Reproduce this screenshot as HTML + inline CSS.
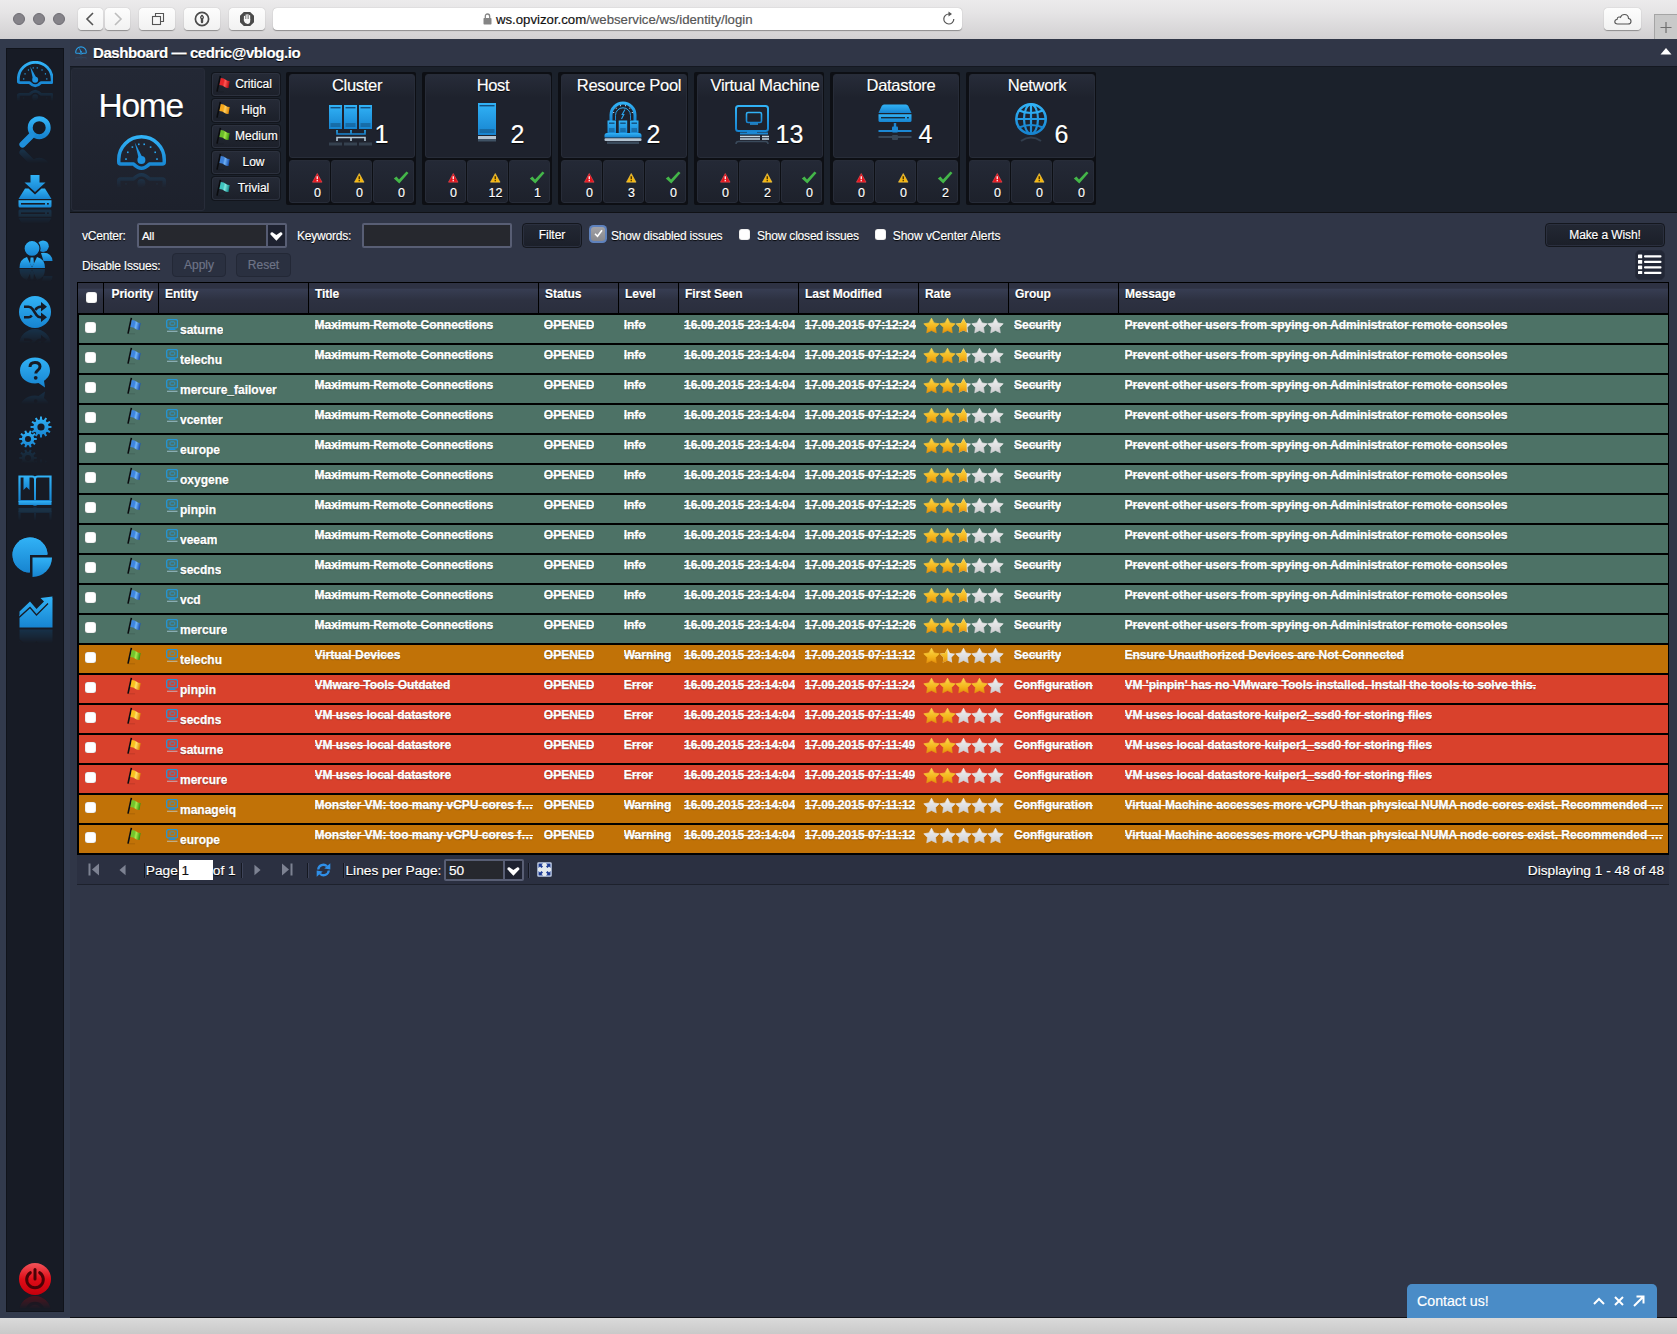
<!DOCTYPE html><html><head><meta charset="utf-8"><title>Dashboard</title><style>
*{box-sizing:border-box;margin:0;padding:0}
html,body{width:1677px;height:1334px;overflow:hidden}
body{position:relative;background:#303647;font-family:"Liberation Sans",sans-serif;color:#fff;font-size:12px;-webkit-text-stroke-width:0.18px}
.abs{position:absolute}
#chrome{left:0;top:0;width:1677px;height:39px;background:linear-gradient(#ecebec 0,#e6e5e6 30%,#d2d0d2 100%)}
.tl{width:12px;height:12px;border-radius:6px;background:#858389;border:0.800px solid #6f6d74;top:13px}
.cb{top:8px;height:22px;background:linear-gradient(#fdfdfd,#f2f2f2);border-radius:4px;box-shadow:0 0.5px 1px rgba(0,0,0,.35)}
#url{left:273px;top:8px;width:689px;height:22px;background:#fff;border-radius:4px;box-shadow:0 0.5px 1px rgba(0,0,0,.35);color:#333;font-size:13.2px;line-height:22px}
#bot{left:0;top:1318px;width:1677px;height:16px;background:linear-gradient(#dadada,#c9c9c9)}
#side{left:0;top:39px;width:70px;height:1279px;background:#323a4c}
#sidein{left:6px;top:9px;width:58px;height:1264px;background:#171b25;border:1px solid #10131a}
#title{left:70px;top:39px;width:1607px;height:27px;background:#303647}
#title b{position:absolute;left:23px;top:4.500px;font-size:15px;letter-spacing:-0.4px;text-shadow:0 1px 1px #000}
#dash{left:70px;top:66px;width:1607px;height:147px;background:#1b212b;border-top:1px solid #141821;border-bottom:1px solid #101216}
.box{background:linear-gradient(#262b38 0,#1e222d 30%,#1e222d 100%);border:1px solid #2d3240;border-radius:3px}
#home{left:1px;top:0.500px;width:134px;height:143.500px;background:linear-gradient(#232835,#1d212c);border:1px solid #272c39;border-radius:3px}
.pb{left:142px;width:68px;height:23px;background:linear-gradient(#252a36,#1c202a);border:1px solid #2c313e;border-radius:3px;box-shadow:0 0 0 1px #12151c;font-size:12px;line-height:21px;text-shadow:0 1px 1px #000}
.tile{top:5px;width:130px;height:133px;background:#0d0f14;border-radius:2px}
.tile .top{left:2.500px;top:2px;width:126px;height:84px;background:linear-gradient(#272c39 0,#1e222d 28%,#1e222d 100%);border:1px solid #272c38;border-radius:3px}
.tile .cell{top:88px;width:41px;height:43px;background:linear-gradient(#242936,#1d212b);border:1px solid #272c38;border-radius:3px}
.tile .ttl{left:6px;top:4px;width:130px;text-align:center;font-size:16.5px;letter-spacing:-0.3px;text-shadow:0 1px 1px #000;white-space:nowrap}
.tile .num{font-size:25px;top:48px;line-height:28px;text-shadow:0 1px 1px #000}
.cnt{font-size:12.5px;text-align:center;width:41px;top:114px;text-shadow:0 1px 1px #000}
#filt{left:70px;top:212px;width:1607px;height:70px}
.lbl{font-size:12px;letter-spacing:-0.2px;text-shadow:0 1px 1px #000;white-space:nowrap}
.inp{background:#26282e;border:2px solid #585e74;border-radius:2px}
.btn{background:linear-gradient(#232834,#1b1f29);border:1px solid #14171e;border-radius:4px;text-align:center;font-size:12px;text-shadow:0 1px 1px #000;box-shadow:0 0 0 1px #2a2f3e inset}
.btn.dis{color:#6e7487;background:#2a3040;box-shadow:none;border-color:#232836;text-shadow:none}
.chk{width:11px;height:11px;background:#fff;border-radius:2.5px;box-shadow:0 0 1px rgba(0,0,0,.6) inset}
#grid{left:77px;top:282px;width:1592px;height:573px;background:#000}
.hd{top:1px;height:30px;background:linear-gradient(#2e3243 0,#2e3243 17%,#373d52 21%,#2d3141 58%,#2a2e3d 100%);font-weight:bold;font-size:12px;padding:4px 0 0 6px;text-shadow:0 1px 1px #000;letter-spacing:-0.05px}
.row{left:1px;width:1590px;height:28px;box-shadow:inset 1px 0 0 #000}
.row div{position:absolute;white-space:nowrap;font-weight:bold;font-size:12px;letter-spacing:0;text-shadow:0 1px 1px rgba(0,0,0,.4);-webkit-text-stroke:0.25px #fff;overflow:hidden}
.row .s{top:3px;height:16px;line-height:14px}
.k{display:inline-block;height:14px;background:linear-gradient(#fff,#fff) 0 7px/100% 1px no-repeat}
.row .e{top:7px;left:102px;height:18px;line-height:16px}
#pg{left:77px;top:855px;width:1592px;height:30px;background:#2b3041;border-bottom:1px solid #1d212c}
#pg .t{position:absolute;font-size:13.7px;top:7.500px;white-space:nowrap;text-shadow:0 1px 1px #000}
#contact{left:1407px;top:1284px;width:250px;height:34px;background:#4a8cc7;border-radius:5px 5px 0 0;font-size:14.2px;line-height:35px}
</style></head><body><svg width="0" height="0" style="position:absolute"><defs><linearGradient id="gb" x1="0" y1="0" x2="0" y2="1"><stop offset="0" stop-color="#31b2f6"/><stop offset="1" stop-color="#1784d0"/></linearGradient><linearGradient id="gr" x1="0" y1="0" x2="0" y2="1"><stop offset="0" stop-color="#f2545a"/><stop offset="0.5" stop-color="#e00d18"/><stop offset="1" stop-color="#c4000c"/></linearGradient><linearGradient id="gy" x1="0" y1="0" x2="0" y2="1"><stop offset="0" stop-color="#fcd94c"/><stop offset="0.600" stop-color="#f3b51c"/><stop offset="1" stop-color="#e5900c"/></linearGradient><linearGradient id="gs" x1="0" y1="0" x2="0" y2="1"><stop offset="0" stop-color="#f2f2f2"/><stop offset="1" stop-color="#cfcfd2"/></linearGradient><linearGradient id="fe8252a" x1="0" y1="0" x2="1" y2="0.200"><stop offset="0" stop-color="#e8252a"/><stop offset="0.450" stop-color="#e8252a"/><stop offset="0.620" stop-color="#ff5a55"/><stop offset="1" stop-color="#b80f16"/></linearGradient><linearGradient id="ff7a81b" x1="0" y1="0" x2="1" y2="0.200"><stop offset="0" stop-color="#f7a81b"/><stop offset="0.450" stop-color="#f7a81b"/><stop offset="0.620" stop-color="#ffd060"/><stop offset="1" stop-color="#e08a08"/></linearGradient><linearGradient id="f6cbf2a" x1="0" y1="0" x2="1" y2="0.200"><stop offset="0" stop-color="#6cbf2a"/><stop offset="0.450" stop-color="#6cbf2a"/><stop offset="0.620" stop-color="#a5e64a"/><stop offset="1" stop-color="#3f9a10"/></linearGradient><linearGradient id="f3d7fd6" x1="0" y1="0" x2="1" y2="0.200"><stop offset="0" stop-color="#3d7fd6"/><stop offset="0.450" stop-color="#3d7fd6"/><stop offset="0.620" stop-color="#6fb0f5"/><stop offset="1" stop-color="#1d55b0"/></linearGradient><linearGradient id="f3fc4bf" x1="0" y1="0" x2="1" y2="0.200"><stop offset="0" stop-color="#3fc4bf"/><stop offset="0.450" stop-color="#3fc4bf"/><stop offset="0.620" stop-color="#7fe8e0"/><stop offset="1" stop-color="#1a9090"/></linearGradient><linearGradient id="f3f86e0" x1="0" y1="0" x2="1" y2="0.200"><stop offset="0" stop-color="#3f86e0"/><stop offset="0.450" stop-color="#3f86e0"/><stop offset="0.620" stop-color="#6fb4f8"/><stop offset="1" stop-color="#1d55b3"/></linearGradient><linearGradient id="f74c52c" x1="0" y1="0" x2="1" y2="0.200"><stop offset="0" stop-color="#74c52c"/><stop offset="0.450" stop-color="#74c52c"/><stop offset="0.620" stop-color="#a8ea4c"/><stop offset="1" stop-color="#3f9a10"/></linearGradient><linearGradient id="ff9c21f" x1="0" y1="0" x2="1" y2="0.200"><stop offset="0" stop-color="#f9c21f"/><stop offset="0.450" stop-color="#f9c21f"/><stop offset="0.620" stop-color="#ffe06a"/><stop offset="1" stop-color="#e08e08"/></linearGradient></defs></svg>
<div id="chrome" class="abs">
<div class="abs tl" style="left:13px"></div>
<div class="abs tl" style="left:33px"></div>
<div class="abs tl" style="left:53px"></div>
<div class="abs cb" style="left:78px;width:25px"><svg class="abs" style="left:0;top:0" width="25" height="22" viewBox="0 0 25 22" ><path d="M15 5 L9 11 L15 17" stroke="#555" stroke-width="1.6" fill="none"/></svg></div>
<div class="abs cb" style="left:105px;width:25px"><svg class="abs" style="left:0;top:0" width="25" height="22" viewBox="0 0 25 22" ><path d="M10 5 L16 11 L10 17" stroke="#bdbdbd" stroke-width="1.6" fill="none"/></svg></div>
<div class="abs cb" style="left:139px;width:36px"><svg class="abs" style="left:0;top:0" width="36" height="22" viewBox="0 0 36 22" ><rect x="13.5" y="8.5" width="8" height="8" fill="#f7f7f7" stroke="#555" stroke-width="1.1"/><path d="M16.500 8.5 V5.500 H24.500 V13.500 H21.5" stroke="#555" stroke-width="1.1" fill="none"/></svg></div>
<div class="abs cb" style="left:184px;width:36px"><svg class="abs" style="left:0;top:0" width="36" height="22" viewBox="0 0 36 22" ><circle cx="18" cy="11" r="6.6" fill="none" stroke="#4a4a4a" stroke-width="1.7"/><rect x="16.800" y="6.800" width="2.4" height="8.4" rx="1.2" fill="#4a4a4a"/><circle cx="18" cy="9.300" r="1.9" fill="#4a4a4a"/><circle cx="18" cy="9.300" r="0.7" fill="#f7f7f7"/></svg></div>
<div class="abs cb" style="left:229px;width:36px"><svg class="abs" style="left:0;top:0" width="36" height="22" viewBox="0 0 36 22" ><path d="M14.800 4 H21.200 L25 7.800 V14.200 L21.200 18 H14.800 L11 14.200 V7.800 Z" fill="#4a4a4a"/><path d="M15.500 12 V8.300 M17.200 11.500 V6.800 M18.900 11.500 V6.500 M20.600 11.500 V7.500" stroke="#f7f7f7" stroke-width="1.2" stroke-linecap="round"/><path d="M14.900 11 H21.200 V13 Q21.200 16 18.500 16 Q16 16 14.900 13 Z" fill="#f7f7f7"/></svg></div>
<div id="url" class="abs"><svg class="abs" style="left:210px;top:5px" width="9" height="12" viewBox="0 0 9 12" ><rect x="0.5" y="5" width="8" height="6.5" rx="0.8" fill="#858585"/><path d="M2.300 5 V3.500 Q2.300 1 4.500 1 Q6.700 1 6.700 3.500 V5" stroke="#858585" stroke-width="1.3" fill="none"/></svg><span class="abs" style="left:223px;top:1px;white-space:nowrap;letter-spacing:0"><span style="color:#111">ws.opvizor.com</span><span style="color:#555">/webservice/ws/identity/login</span></span><svg class="abs" style="left:669px;top:3px" width="14" height="15" viewBox="0 0 14 15" ><path d="M11.800 8 A5 5 0 1 1 7 3" stroke="#555" stroke-width="1.2" fill="none"/><path d="M6.500 0.500 L10 3 L6.500 5.600 Z" fill="#555"/></svg></div>
<div class="abs cb" style="left:1604px;width:37px"><svg class="abs" style="left:0;top:0" width="37" height="22" viewBox="0 0 37 22" ><path d="M13.500 16 H24 Q27 16 27 13.200 Q27 10.800 24.500 10.500 Q24.300 6.500 20.500 6.500 Q17.500 6.500 16.500 9.300 Q15.800 8.800 14.800 9 Q13 9.500 13.200 11.200 Q10.800 11.700 10.800 13.800 Q10.800 16 13.500 16 Z" fill="none" stroke="#555" stroke-width="1.1"/></svg></div>
<div class="abs" style="left:1654px;top:14px;width:24px;height:25px;background:#c9c9c9;border:1px solid #a5a5a5;border-bottom:none"><svg class="abs" style="left:-1px;top:0" width="24" height="25" viewBox="0 0 24 25" ><path d="M12 7 V18 M6.500 12.500 H17.500" stroke="#6f6f6f" stroke-width="1.2"/></svg></div>
</div>
<div id="bot" class="abs"></div><div class="abs" style="left:70px;top:1317px;width:1607px;height:1px;background:#0e1016"></div><div class="abs" style="left:0;top:39px;width:1677px;height:1px;background:#262b38"></div>
<div id="side" class="abs"><div id="sidein" class="abs"></div>
<svg class="abs" style="left:16.800px;top:22px;-webkit-box-reflect:below 1px linear-gradient(rgba(255,255,255,0) 55%,rgba(255,255,255,.22))" width="36.5" height="26.8" viewBox="0 0 49 36" ><path d="M1.750 24.500 A22.750 22.750 0 0 1 47.250 24.500 V27 Q47.250 29 45.250 29 H32.500 Q24.500 37.500 16.500 29 H3.750 Q1.750 29 1.750 27 Z" fill="none" stroke="url(#gb)" stroke-width="3.8" stroke-linejoin="round"/><rect x="8.2" y="23.3" width="1.600" height="1.600" fill="#2aa5ee"/><rect x="10.0" y="16.5" width="1.600" height="1.600" fill="#2aa5ee"/><rect x="14.6" y="11.3" width="1.600" height="1.600" fill="#2aa5ee"/><rect x="21.0" y="8.5" width="1.600" height="1.600" fill="#2aa5ee"/><rect x="26.4" y="8.5" width="1.600" height="1.600" fill="#2aa5ee"/><rect x="32.8" y="11.3" width="1.600" height="1.600" fill="#2aa5ee"/><rect x="37.4" y="16.5" width="1.600" height="1.600" fill="#2aa5ee"/><rect x="39.2" y="23.3" width="1.600" height="1.600" fill="#2aa5ee"/><path d="M17.700 7.300 L26.5 23.5 L21.7 25.5 Z" fill="#1f93e0"/><circle cx="24.400" cy="25.100" r="4" fill="#1f93e0"/></svg><svg class="abs" style="left:19px;top:77px;-webkit-box-reflect:below 1px linear-gradient(rgba(255,255,255,0) 55%,rgba(255,255,255,.22))" width="32" height="32" viewBox="0 0 32 32" ><circle cx="20.200" cy="11.700" r="9" fill="none" stroke="url(#gb)" stroke-width="5"/><path d="M12.500 19.500 L3.500 28.500" stroke="#1f8fda" stroke-width="6.200" stroke-linecap="round"/></svg><svg class="abs" style="left:18px;top:135.500px;-webkit-box-reflect:below 1px linear-gradient(rgba(255,255,255,0) 55%,rgba(255,255,255,.22))" width="34" height="33" viewBox="0 0 34 33" ><path d="M12.500 0 H21.500 V7.500 H27.500 L17 17 L6.500 7.500 H12.500 Z" fill="url(#gb)"/><path d="M7 13.500 H10.500 L17 19.500 L23.500 13.500 H27 L33.500 24 H0.500 Z" fill="url(#gb)"/><path d="M0.500 25.300 H33.500 V31 Q33.500 32.500 32 32.500 H2 Q0.500 32.500 0.500 31 Z" fill="url(#gb)"/><rect x="3" y="28" width="24" height="1.600" fill="#171b25"/><rect x="29" y="28" width="1.800" height="1.600" fill="#171b25"/></svg><svg class="abs" style="left:18.500px;top:200.500px;-webkit-box-reflect:below 1px linear-gradient(rgba(255,255,255,0) 55%,rgba(255,255,255,.22))" width="34" height="28" viewBox="0 0 34 28" ><circle cx="24" cy="6.200" r="5.800" fill="url(#gb)"/><path d="M22 13 Q28 12 31 15 Q33.500 17.500 33.500 21 H24.500 Z" fill="url(#gb)"/><circle cx="13" cy="8.400" r="8" fill="url(#gb)" stroke="#171b25" stroke-width="1.200"/><path d="M0.500 28 Q0.500 19 8 17 L13 27.500 L18 17 Q26 19 26 28 Z" fill="url(#gb)"/><path d="M11.600 17.500 H14.400 L15 24 L13 27 L11 24 Z" fill="url(#gb)"/></svg><svg class="abs" style="left:19px;top:257px;-webkit-box-reflect:below 1px linear-gradient(rgba(255,255,255,0) 55%,rgba(255,255,255,.22))" width="32" height="32" viewBox="0 0 32 32" ><circle cx="16" cy="16" r="16" fill="url(#gb)"/><path d="M5 10.800 H9.500 Q12 10.800 13.500 13 L17.500 19 Q19 21.200 21.500 21.200 H23" stroke="#171b25" stroke-width="2.600" fill="none"/><path d="M5 21.200 H9.500 Q11.500 21.200 12.800 19.500 M16.200 14 Q18.500 10.800 21.500 10.800 H23" stroke="#171b25" stroke-width="2.600" fill="none"/><path d="M22 6 L28 10.800 L22 15.600 Z M22 16.400 L28 21.200 L22 26 Z" fill="#171b25"/></svg><svg class="abs" style="left:19px;top:318px;-webkit-box-reflect:below 1px linear-gradient(rgba(255,255,255,0) 55%,rgba(255,255,255,.22))" width="32" height="32" viewBox="0 0 32 32" ><path d="M16 0.500 C24.500 0.500 31 6 31 13.500 C31 18 28.500 21.500 25 23.800 L26 30.500 L19.500 26 C18.500 26.300 17.300 26.400 16 26.400 C7.500 26.400 1 21 1 13.500 C1 6 7.500 0.500 16 0.500 Z" fill="url(#gb)"/><path d="M11 10 Q11 5.500 16 5.500 Q21 5.500 21 9.600 Q21 12 18.600 13.500 Q16.800 14.700 16.800 16.500" stroke="#171b25" stroke-width="3" fill="none"/><circle cx="16.700" cy="20.800" r="1.900" fill="#171b25"/></svg><svg class="abs" style="left:19px;top:377px;-webkit-box-reflect:below 1px linear-gradient(rgba(255,255,255,0) 55%,rgba(255,255,255,.22))" width="33" height="32" viewBox="0 0 33 32" ><path d="M29.52 9.89 L32.46 10.07 L32.46 11.93 L29.52 12.11 L29.07 13.80 L31.52 15.42 L30.59 17.04 L27.96 15.72 L26.72 16.96 L28.04 19.59 L26.42 20.52 L24.80 18.07 L23.11 18.52 L22.93 21.46 L21.07 21.46 L20.89 18.52 L19.20 18.07 L17.58 20.52 L15.96 19.59 L17.28 16.96 L16.04 15.72 L13.41 17.04 L12.48 15.42 L14.93 13.80 L14.48 12.11 L11.54 11.93 L11.54 10.07 L14.48 9.89 L14.93 8.20 L12.48 6.58 L13.41 4.96 L16.04 6.28 L17.28 5.04 L15.96 2.41 L17.58 1.48 L19.20 3.93 L20.89 3.48 L21.07 0.54 L22.93 0.54 L23.11 3.48 L24.80 3.93 L26.42 1.48 L28.04 2.41 L26.72 5.04 L27.96 6.28 L30.59 4.96 L31.52 6.58 L29.07 8.20 Z M25.6 11 A3.6 3.6 0 1 0 18.4 11 A3.6 3.6 0 1 0 25.6 11 Z" fill="url(#gb)" fill-rule="evenodd"/><path d="M15.10 21.91 L17.75 22.06 L17.75 23.94 L15.10 24.09 L14.58 25.71 L16.63 27.38 L15.53 28.90 L13.30 27.47 L11.92 28.47 L12.60 31.03 L10.81 31.61 L9.85 29.14 L8.15 29.14 L7.19 31.61 L5.40 31.03 L6.08 28.47 L4.70 27.47 L2.47 28.90 L1.37 27.38 L3.42 25.71 L2.90 24.09 L0.25 23.94 L0.25 22.06 L2.90 21.91 L3.42 20.29 L1.37 18.62 L2.47 17.10 L4.70 18.53 L6.08 17.53 L5.40 14.97 L7.19 14.39 L8.15 16.86 L9.85 16.86 L10.81 14.39 L12.60 14.97 L11.92 17.53 L13.30 18.53 L15.53 17.10 L16.63 18.62 L14.58 20.29 Z M12 23 A3 3 0 1 0 6 23 A3 3 0 1 0 12 23 Z" fill="url(#gb)" fill-rule="evenodd"/></svg><svg class="abs" style="left:18px;top:436px;-webkit-box-reflect:below 1px linear-gradient(rgba(255,255,255,0) 55%,rgba(255,255,255,.22))" width="34" height="31" viewBox="0 0 34 31" ><path d="M1.500 1.500 H14 Q17 1.500 17 4 Q17 1.500 20 1.500 H32.500 V26 H1.500 Z" fill="none" stroke="url(#gb)" stroke-width="2.200"/><rect x="16" y="3" width="2" height="24" fill="url(#gb)"/><path d="M5.500 1 H11.500 V15 L8.500 12 L5.500 15 Z" fill="url(#gb)"/><path d="M0.500 26 H33.500 V30 H19.500 Q17 31.500 14.500 30 H0.500 Z" fill="url(#gb)"/></svg><svg class="abs" style="left:12px;top:497.500px" width="41" height="40" viewBox="0 0 41 40" ><path d="M35.500 17 A17.500 17.500 0 1 0 17.500 35.500 L17.500 17.500 Z M35.400 17 A17.500 17.500 0 0 0 18 0.500 Z" fill="url(#gb)"/><circle cx="18" cy="18" r="17.500" fill="url(#gb)"/><path d="M18 18 H41 V41 H18 Z" fill="#171b25"/><path d="M20.500 20.500 H40 A19.500 19.500 0 0 1 20.500 40 Z" fill="url(#gb)"/></svg><svg class="abs" style="left:18.500px;top:557px;-webkit-box-reflect:below 1px linear-gradient(rgba(255,255,255,0) 55%,rgba(255,255,255,.22))" width="34" height="32" viewBox="0 0 34 32" ><path d="M0.500 31.500 V15.500 L11 5.500 L17.500 13 L25 5.500 L21.500 2 L33.500 0.500 L32 12 L28.500 8.800 L17.500 20 L11 12.500 L0.500 22 Z" fill="url(#gb)"/><path d="M0.500 31.500 V19 L11 9.500 L17.500 17 L33.500 2 V31.500 Z" fill="url(#gb)"/><path d="M0 21.500 L11 11.500 L17.500 19 L29 7.500" stroke="#171b25" stroke-width="1.300" fill="none"/></svg><svg class="abs" style="left:19px;top:1224px;-webkit-box-reflect:below 1px linear-gradient(rgba(255,255,255,0) 60%,rgba(255,255,255,.3))" width="32" height="32" viewBox="0 0 32 32" ><circle cx="16" cy="16" r="16" fill="url(#gr)"/><path d="M11.300 9.700 A8.300 8.300 0 1 0 20.700 9.700" stroke="#4a0206" stroke-width="3" fill="none" stroke-linecap="round"/><path d="M16 6.500 V16" stroke="#4a0206" stroke-width="3" stroke-linecap="round"/></svg>
</div>
<div id="title" class="abs"><svg class="abs" style="left:4.800px;top:7px;-webkit-box-reflect:below 1px linear-gradient(rgba(255,255,255,0) 55%,rgba(255,255,255,.22))" width="12" height="9" viewBox="0 0 12 9" ><path d="M0.700 6.200 A5.300 5.300 0 0 1 11.300 6.200 Q11.300 7.300 10.300 7.300 H7.800 Q6 8.700 4.200 7.300 H1.700 Q0.700 7.300 0.700 6.200 Z" fill="none" stroke="#2a9fe8" stroke-width="1.100"/><path d="M4.500 2.500 L6 6" stroke="#2a9fe8" stroke-width="0.900"/><circle cx="6" cy="6" r="0.900" fill="#2a9fe8"/></svg><b>Dashboard — cedric@vblog.io</b><svg class="abs" style="left:1590px;top:8px" width="12" height="8" viewBox="0 0 12 8"><path d="M0.5 7.5 L6 1 L11.5 7.5 Z" fill="#fff"/></svg></div>
<div id="dash" class="abs">
<div id="home" class="abs"><div class="abs" style="left:1.700px;top:18.200px;width:134px;text-align:center;font-size:33.500px;letter-spacing:-1.2px;text-shadow:0 1px 1px #000">Home</div><svg class="abs" style="left:44.600px;top:66.400px;-webkit-box-reflect:below 1px linear-gradient(rgba(255,255,255,0) 55%,rgba(255,255,255,.22))" width="49" height="36" viewBox="0 0 49 36" ><path d="M1.750 24.500 A22.750 22.750 0 0 1 47.250 24.500 V27 Q47.250 29 45.250 29 H32.500 Q24.500 37.500 16.500 29 H3.750 Q1.750 29 1.750 27 Z" fill="none" stroke="url(#gb)" stroke-width="3.5" stroke-linejoin="round"/><rect x="8.2" y="23.3" width="1.600" height="1.600" fill="#2aa5ee"/><rect x="10.0" y="16.5" width="1.600" height="1.600" fill="#2aa5ee"/><rect x="14.6" y="11.3" width="1.600" height="1.600" fill="#2aa5ee"/><rect x="21.0" y="8.5" width="1.600" height="1.600" fill="#2aa5ee"/><rect x="26.4" y="8.5" width="1.600" height="1.600" fill="#2aa5ee"/><rect x="32.8" y="11.3" width="1.600" height="1.600" fill="#2aa5ee"/><rect x="37.4" y="16.5" width="1.600" height="1.600" fill="#2aa5ee"/><rect x="39.2" y="23.3" width="1.600" height="1.600" fill="#2aa5ee"/><path d="M17.700 7.300 L26.0 23.5 L22.2 25.5 Z" fill="#1f93e0"/><circle cx="24.400" cy="25.100" r="4" fill="#1f93e0"/></svg></div>
<div class="abs pb" style="top:5.5px"><svg class="abs" style="left:3px;top:1.500px" width="15" height="18" viewBox="0 0 15 18" ><path d="M4.400 0.800 L1 16.600" stroke="#0b0c0f" stroke-width="1.600"/><path d="M1.500 16.800 H8" stroke="#000" stroke-width="0.800" opacity="0.150"/><path d="M4.800 2.900 Q8 2.900 9.700 4.700 Q11.300 6.200 13.700 6.100 L12.500 13.100 Q10 13.200 8.300 11.700 Q6.500 10.100 3.400 9.900 Z" fill="url(#fe8252a)"/></svg><span class="abs" style="left:22px;width:37px;text-align:center;letter-spacing:0;white-space:nowrap">Critical</span></div>
<div class="abs pb" style="top:31.5px"><svg class="abs" style="left:3px;top:1.500px" width="15" height="18" viewBox="0 0 15 18" ><path d="M4.400 0.800 L1 16.600" stroke="#0b0c0f" stroke-width="1.600"/><path d="M1.500 16.800 H8" stroke="#000" stroke-width="0.800" opacity="0.150"/><path d="M4.800 2.900 Q8 2.900 9.700 4.700 Q11.300 6.200 13.700 6.100 L12.500 13.100 Q10 13.200 8.300 11.700 Q6.500 10.100 3.400 9.900 Z" fill="url(#ff7a81b)"/></svg><span class="abs" style="left:22px;width:37px;text-align:center;letter-spacing:0;white-space:nowrap">High</span></div>
<div class="abs pb" style="top:57.5px"><svg class="abs" style="left:3px;top:1.500px" width="15" height="18" viewBox="0 0 15 18" ><path d="M4.400 0.800 L1 16.600" stroke="#0b0c0f" stroke-width="1.600"/><path d="M1.500 16.800 H8" stroke="#000" stroke-width="0.800" opacity="0.150"/><path d="M4.800 2.900 Q8 2.900 9.700 4.700 Q11.300 6.200 13.700 6.100 L12.500 13.100 Q10 13.200 8.300 11.700 Q6.500 10.100 3.400 9.900 Z" fill="url(#f6cbf2a)"/></svg><span class="abs" style="left:22px;width:37px;text-align:left;letter-spacing:0;white-space:nowrap">Medium</span></div>
<div class="abs pb" style="top:83.5px"><svg class="abs" style="left:3px;top:1.500px" width="15" height="18" viewBox="0 0 15 18" ><path d="M4.400 0.800 L1 16.600" stroke="#0b0c0f" stroke-width="1.600"/><path d="M1.500 16.800 H8" stroke="#000" stroke-width="0.800" opacity="0.150"/><path d="M4.800 2.900 Q8 2.900 9.700 4.700 Q11.300 6.200 13.700 6.100 L12.500 13.100 Q10 13.200 8.300 11.700 Q6.500 10.100 3.400 9.900 Z" fill="url(#f3d7fd6)"/></svg><span class="abs" style="left:22px;width:37px;text-align:center;letter-spacing:0;white-space:nowrap">Low</span></div>
<div class="abs pb" style="top:109.5px"><svg class="abs" style="left:3px;top:1.500px" width="15" height="18" viewBox="0 0 15 18" ><path d="M4.400 0.800 L1 16.600" stroke="#0b0c0f" stroke-width="1.600"/><path d="M1.500 16.800 H8" stroke="#000" stroke-width="0.800" opacity="0.150"/><path d="M4.800 2.900 Q8 2.900 9.700 4.700 Q11.300 6.200 13.700 6.100 L12.500 13.100 Q10 13.200 8.300 11.700 Q6.500 10.100 3.400 9.900 Z" fill="url(#f3fc4bf)"/></svg><span class="abs" style="left:22px;width:37px;text-align:center;letter-spacing:0;white-space:nowrap">Trivial</span></div>
<div class="abs tile" style="left:216px"><div class="abs top"></div>
<div class="abs ttl">Cluster</div>
<svg class="abs" style="left:43.0px;top:33px" width="43" height="41" viewBox="0 0 43 41" ><rect x="0" y="0" width="13" height="24" fill="url(#gb)"/><rect x="1.5" y="2" width="10" height="1.400" fill="#134e7d"/><rect x="1.5" y="18.5" width="10" height="1" fill="#134e7d"/><rect x="1.5" y="20.5" width="10" height="1" fill="#134e7d"/><rect x="15" y="0" width="13" height="24" fill="url(#gb)"/><rect x="16.5" y="2" width="10" height="1.400" fill="#134e7d"/><rect x="16.5" y="18.5" width="10" height="1" fill="#134e7d"/><rect x="16.5" y="20.5" width="10" height="1" fill="#134e7d"/><rect x="30" y="0" width="13" height="24" fill="url(#gb)"/><rect x="31.5" y="2" width="10" height="1.400" fill="#134e7d"/><rect x="31.5" y="18.5" width="10" height="1" fill="#134e7d"/><rect x="31.5" y="20.5" width="10" height="1" fill="#134e7d"/><path d="M8 25 V29 H36 V25 M22 25 V29" stroke="url(#gb)" stroke-width="1.600" fill="none"/><g opacity="0.85"><path d="M8 36 V32.500 H36 V36 M22 32.500 V36" stroke="#cfe6f5" stroke-width="1.600" fill="none"/></g><g opacity="0.180"><rect x="0" y="37.500" width="13" height="3" fill="#9ecbe8"/><rect x="15" y="37.500" width="13" height="3" fill="#9ecbe8"/><rect x="30" y="37.500" width="13" height="3" fill="#9ecbe8"/></g></svg>
<div class="abs num" style="left:88.5px">1</div>
<div class="abs cell" style="left:3px"></div>
<svg class="abs" style="left:26.2px;top:101px" width="10.5" height="9.6" viewBox="0 0 12 11" ><path d="M6 0.500 L11.500 10.500 H0.500 Z" fill="#e3121b" stroke="#ff5a5f" stroke-width="0.600" stroke-linejoin="round"/><path d="M6 3.700 V7.300" stroke="#fff" stroke-width="1.500"/><rect x="5.250" y="8.100" width="1.500" height="1.400" fill="#fff"/></svg>
<div class="abs cnt" style="left:11px">0</div>
<div class="abs cell" style="left:45px"></div>
<svg class="abs" style="left:68.2px;top:101px" width="10.5" height="9.6" viewBox="0 0 12 11" ><path d="M6 0.500 L11.500 10.500 H0.500 Z" fill="#f5b50d" stroke="#ffd75a" stroke-width="0.600" stroke-linejoin="round"/><path d="M6 3.700 V7.300" stroke="#3a2a00" stroke-width="1.500"/><rect x="5.250" y="8.100" width="1.500" height="1.400" fill="#3a2a00"/></svg>
<div class="abs cnt" style="left:53px">0</div>
<div class="abs cell" style="left:87px"></div>
<svg class="abs" style="left:106.7px;top:99.200px" width="16" height="13" viewBox="0 0 16 13" ><path d="M0.800 7.500 L3.500 5.500 L6 8.500 L13.500 0.500 L15.500 2 L6.300 12.500 Z" fill="#44b649"/></svg>
<div class="abs cnt" style="left:95px">0</div>
</div>
<div class="abs tile" style="left:352px"><div class="abs top"></div>
<div class="abs ttl">Host</div>
<svg class="abs" style="left:55.5px;top:30.500px" width="18" height="40" viewBox="0 0 18 40" ><rect x="0" y="0" width="18" height="32" fill="url(#gb)"/><rect x="1.5" y="2" width="15" height="1.400" fill="#134e7d"/><rect x="1.5" y="26.5" width="15" height="1" fill="#134e7d"/><rect x="1.5" y="28.5" width="15" height="1" fill="#134e7d"/><rect x="0" y="33" width="18" height="3" fill="#d9eefb" opacity="0.800"/><rect x="0" y="36" width="18" height="2.500" fill="#8fc4e6" opacity="0.300"/></svg>
<div class="abs num" style="left:88.5px">2</div>
<div class="abs cell" style="left:3px"></div>
<svg class="abs" style="left:26.2px;top:101px" width="10.5" height="9.6" viewBox="0 0 12 11" ><path d="M6 0.500 L11.500 10.500 H0.500 Z" fill="#e3121b" stroke="#ff5a5f" stroke-width="0.600" stroke-linejoin="round"/><path d="M6 3.700 V7.300" stroke="#fff" stroke-width="1.500"/><rect x="5.250" y="8.100" width="1.500" height="1.400" fill="#fff"/></svg>
<div class="abs cnt" style="left:11px">0</div>
<div class="abs cell" style="left:45px"></div>
<svg class="abs" style="left:68.2px;top:101px" width="10.5" height="9.6" viewBox="0 0 12 11" ><path d="M6 0.500 L11.500 10.500 H0.500 Z" fill="#f5b50d" stroke="#ffd75a" stroke-width="0.600" stroke-linejoin="round"/><path d="M6 3.700 V7.300" stroke="#3a2a00" stroke-width="1.500"/><rect x="5.250" y="8.100" width="1.500" height="1.400" fill="#3a2a00"/></svg>
<div class="abs cnt" style="left:53px">12</div>
<div class="abs cell" style="left:87px"></div>
<svg class="abs" style="left:106.7px;top:99.200px" width="16" height="13" viewBox="0 0 16 13" ><path d="M0.800 7.500 L3.500 5.500 L6 8.500 L13.500 0.500 L15.500 2 L6.300 12.500 Z" fill="#44b649"/></svg>
<div class="abs cnt" style="left:95px">1</div>
</div>
<div class="abs tile" style="left:488px"><div class="abs top"></div>
<div class="abs ttl">Resource Pool</div>
<svg class="abs" style="left:45.5px;top:28.500px" width="38" height="44" viewBox="0 0 38 44" ><path d="M7 21 V14 A12 12 0 0 1 31 14 V21" fill="none" stroke="url(#gb)" stroke-width="3"/><path d="M11.500 19 V14.300 A7.500 7.500 0 0 1 26.500 14.300 V19" fill="none" stroke="url(#gb)" stroke-width="1"/><rect x="9.2" y="11.0" width="1" height="1" fill="#cfeaff"/><rect x="11.7" y="6.7" width="1" height="1" fill="#cfeaff"/><rect x="16.0" y="4.2" width="1" height="1" fill="#cfeaff"/><rect x="21.0" y="4.2" width="1" height="1" fill="#cfeaff"/><rect x="25.3" y="6.7" width="1" height="1" fill="#cfeaff"/><rect x="27.8" y="11.0" width="1" height="1" fill="#cfeaff"/><path d="M21 8.500 L18.200 13.500 L19.800 13.500 L17.500 18" stroke="#2aa5ee" stroke-width="1.100" fill="none"/><rect x="3.5" y="19.5" width="8.5" height="13.5" fill="url(#gb)"/><rect x="5.0" y="21.5" width="5.5" height="1.400" fill="#134e7d"/><rect x="5.0" y="27.5" width="5.5" height="1" fill="#134e7d"/><rect x="5.0" y="29.5" width="5.5" height="1" fill="#134e7d"/><rect x="14.7" y="19.5" width="8.5" height="13.5" fill="url(#gb)"/><rect x="16.2" y="21.5" width="5.5" height="1.400" fill="#134e7d"/><rect x="16.2" y="27.5" width="5.5" height="1" fill="#134e7d"/><rect x="16.2" y="29.5" width="5.5" height="1" fill="#134e7d"/><rect x="26" y="19.5" width="8.5" height="13.5" fill="url(#gb)"/><rect x="27.5" y="21.5" width="5.5" height="1.400" fill="#134e7d"/><rect x="27.5" y="27.5" width="5.5" height="1" fill="#134e7d"/><rect x="27.5" y="29.5" width="5.5" height="1" fill="#134e7d"/><path d="M0.500 34.500 Q0.500 32 3 32 H35 Q37.500 32 37.500 34.500 V36.500 H0.500 Z" fill="url(#gb)"/><rect x="0.500" y="37.300" width="37" height="2.800" rx="1" fill="#d9eefb" opacity="0.800"/><rect x="3" y="40.500" width="32" height="2.500" fill="#8fc4e6" opacity="0.250"/></svg>
<div class="abs num" style="left:88.5px">2</div>
<div class="abs cell" style="left:3px"></div>
<svg class="abs" style="left:26.2px;top:101px" width="10.5" height="9.6" viewBox="0 0 12 11" ><path d="M6 0.500 L11.500 10.500 H0.500 Z" fill="#e3121b" stroke="#ff5a5f" stroke-width="0.600" stroke-linejoin="round"/><path d="M6 3.700 V7.300" stroke="#fff" stroke-width="1.500"/><rect x="5.250" y="8.100" width="1.500" height="1.400" fill="#fff"/></svg>
<div class="abs cnt" style="left:11px">0</div>
<div class="abs cell" style="left:45px"></div>
<svg class="abs" style="left:68.2px;top:101px" width="10.5" height="9.6" viewBox="0 0 12 11" ><path d="M6 0.500 L11.500 10.500 H0.500 Z" fill="#f5b50d" stroke="#ffd75a" stroke-width="0.600" stroke-linejoin="round"/><path d="M6 3.700 V7.300" stroke="#3a2a00" stroke-width="1.500"/><rect x="5.250" y="8.100" width="1.500" height="1.400" fill="#3a2a00"/></svg>
<div class="abs cnt" style="left:53px">3</div>
<div class="abs cell" style="left:87px"></div>
<svg class="abs" style="left:106.7px;top:99.200px" width="16" height="13" viewBox="0 0 16 13" ><path d="M0.800 7.500 L3.500 5.500 L6 8.500 L13.500 0.500 L15.500 2 L6.300 12.500 Z" fill="#44b649"/></svg>
<div class="abs cnt" style="left:95px">0</div>
</div>
<div class="abs tile" style="left:624px"><div class="abs top"></div>
<div class="abs ttl">Virtual Machine</div>
<svg class="abs" style="left:40.6px;top:32.500px" width="35" height="40" viewBox="0 0 35 40" ><rect x="1" y="1" width="32" height="25" rx="2.500" fill="none" stroke="url(#gb)" stroke-width="2"/><rect x="11.500" y="7.500" width="15" height="10" rx="1.500" fill="none" stroke="url(#gb)" stroke-width="1.600"/><path d="M15 19 H23" stroke="#2596e0" stroke-width="1.500"/><path d="M12 27 H22 M5 28.500 H33" stroke="#1c88d4" stroke-width="2"/><path d="M5 31.500 H25 M27 31.500 H34 M5 34 H25 M27 34 H34" stroke="#d9eefb" stroke-width="1.500" opacity="0.900"/><path d="M1 39 Q1 36.500 3.500 36.500 H30.500 Q33 36.500 33 39" stroke="#8fc4e6" stroke-width="1.500" fill="none" opacity="0.250"/></svg>
<div class="abs num" style="left:81.6px">13</div>
<div class="abs cell" style="left:3px"></div>
<svg class="abs" style="left:26.2px;top:101px" width="10.5" height="9.6" viewBox="0 0 12 11" ><path d="M6 0.500 L11.500 10.500 H0.500 Z" fill="#e3121b" stroke="#ff5a5f" stroke-width="0.600" stroke-linejoin="round"/><path d="M6 3.700 V7.300" stroke="#fff" stroke-width="1.500"/><rect x="5.250" y="8.100" width="1.500" height="1.400" fill="#fff"/></svg>
<div class="abs cnt" style="left:11px">0</div>
<div class="abs cell" style="left:45px"></div>
<svg class="abs" style="left:68.2px;top:101px" width="10.5" height="9.6" viewBox="0 0 12 11" ><path d="M6 0.500 L11.500 10.500 H0.500 Z" fill="#f5b50d" stroke="#ffd75a" stroke-width="0.600" stroke-linejoin="round"/><path d="M6 3.700 V7.300" stroke="#3a2a00" stroke-width="1.500"/><rect x="5.250" y="8.100" width="1.500" height="1.400" fill="#3a2a00"/></svg>
<div class="abs cnt" style="left:53px">2</div>
<div class="abs cell" style="left:87px"></div>
<svg class="abs" style="left:106.7px;top:99.200px" width="16" height="13" viewBox="0 0 16 13" ><path d="M0.800 7.500 L3.500 5.500 L6 8.500 L13.500 0.500 L15.500 2 L6.300 12.500 Z" fill="#44b649"/></svg>
<div class="abs cnt" style="left:95px">0</div>
</div>
<div class="abs tile" style="left:760px"><div class="abs top"></div>
<div class="abs ttl">Datastore</div>
<svg class="abs" style="left:47.5px;top:32px" width="34" height="38" viewBox="0 0 34 38" ><path d="M6 0.500 H28 Q29.500 0.500 30.300 2 L33.500 9 H0.500 L3.700 2 Q4.500 0.500 6 0.500 Z" fill="url(#gb)"/><path d="M0.500 10.300 H33.500 V16.500 Q33.500 18 32 18 H2 Q0.500 18 0.500 16.500 Z" fill="url(#gb)"/><rect x="3" y="13" width="24" height="1.400" fill="#14293a"/><rect x="29" y="13" width="1.800" height="1.400" fill="#14293a"/><rect x="15.800" y="19" width="2.400" height="5" fill="#1c88d4"/><rect x="14" y="22.500" width="6" height="6" rx="1" fill="#1c88d4"/><path d="M0.500 27 H14 M20 27 H33.500" stroke="#1c88d4" stroke-width="2.200"/><g opacity="0.220"><path d="M0.500 33 H14 M20 33 H33.500" stroke="#8fc4e6" stroke-width="2"/><rect x="14" y="31" width="6" height="5" rx="1" fill="#8fc4e6"/></g></svg>
<div class="abs num" style="left:88.5px">4</div>
<div class="abs cell" style="left:3px"></div>
<svg class="abs" style="left:26.2px;top:101px" width="10.5" height="9.6" viewBox="0 0 12 11" ><path d="M6 0.500 L11.500 10.500 H0.500 Z" fill="#e3121b" stroke="#ff5a5f" stroke-width="0.600" stroke-linejoin="round"/><path d="M6 3.700 V7.300" stroke="#fff" stroke-width="1.500"/><rect x="5.250" y="8.100" width="1.500" height="1.400" fill="#fff"/></svg>
<div class="abs cnt" style="left:11px">0</div>
<div class="abs cell" style="left:45px"></div>
<svg class="abs" style="left:68.2px;top:101px" width="10.5" height="9.6" viewBox="0 0 12 11" ><path d="M6 0.500 L11.500 10.500 H0.500 Z" fill="#f5b50d" stroke="#ffd75a" stroke-width="0.600" stroke-linejoin="round"/><path d="M6 3.700 V7.300" stroke="#3a2a00" stroke-width="1.500"/><rect x="5.250" y="8.100" width="1.500" height="1.400" fill="#3a2a00"/></svg>
<div class="abs cnt" style="left:53px">0</div>
<div class="abs cell" style="left:87px"></div>
<svg class="abs" style="left:106.7px;top:99.200px" width="16" height="13" viewBox="0 0 16 13" ><path d="M0.800 7.500 L3.500 5.500 L6 8.500 L13.500 0.500 L15.500 2 L6.300 12.500 Z" fill="#44b649"/></svg>
<div class="abs cnt" style="left:95px">2</div>
</div>
<div class="abs tile" style="left:896px"><div class="abs top"></div>
<div class="abs ttl">Network</div>
<svg class="abs" style="left:48.5px;top:30.500px" width="32" height="40" viewBox="0 0 32 40" ><circle cx="16" cy="16" r="14.700" fill="none" stroke="url(#gb)" stroke-width="2.600"/><ellipse cx="16" cy="16" rx="7" ry="14.700" fill="none" stroke="url(#gb)" stroke-width="2.200"/><path d="M16 1 V31 M1.500 16 H30.500" stroke="url(#gb)" stroke-width="2.200"/><path d="M4 7.500 Q16 12.500 28 7.500 M4 24.500 Q16 19.500 28 24.500" stroke="url(#gb)" stroke-width="2.200" fill="none"/><path d="M6 38 Q16 31 26 38" stroke="#8fc4e6" stroke-width="2" fill="none" opacity="0.180"/></svg>
<div class="abs num" style="left:88.5px">6</div>
<div class="abs cell" style="left:3px"></div>
<svg class="abs" style="left:26.2px;top:101px" width="10.5" height="9.6" viewBox="0 0 12 11" ><path d="M6 0.500 L11.500 10.500 H0.500 Z" fill="#e3121b" stroke="#ff5a5f" stroke-width="0.600" stroke-linejoin="round"/><path d="M6 3.700 V7.300" stroke="#fff" stroke-width="1.500"/><rect x="5.250" y="8.100" width="1.500" height="1.400" fill="#fff"/></svg>
<div class="abs cnt" style="left:11px">0</div>
<div class="abs cell" style="left:45px"></div>
<svg class="abs" style="left:68.2px;top:101px" width="10.5" height="9.6" viewBox="0 0 12 11" ><path d="M6 0.500 L11.500 10.500 H0.500 Z" fill="#f5b50d" stroke="#ffd75a" stroke-width="0.600" stroke-linejoin="round"/><path d="M6 3.700 V7.300" stroke="#3a2a00" stroke-width="1.500"/><rect x="5.250" y="8.100" width="1.500" height="1.400" fill="#3a2a00"/></svg>
<div class="abs cnt" style="left:53px">0</div>
<div class="abs cell" style="left:87px"></div>
<svg class="abs" style="left:106.7px;top:99.200px" width="16" height="13" viewBox="0 0 16 13" ><path d="M0.800 7.500 L3.500 5.500 L6 8.500 L13.500 0.500 L15.500 2 L6.300 12.500 Z" fill="#44b649"/></svg>
<div class="abs cnt" style="left:95px">0</div>
</div>
</div>
<div id="filt" class="abs">
<div class="abs lbl" style="left:12px;top:17px">vCenter:</div>
<div class="abs inp" style="left:67px;top:11px;width:150px;height:25px"><span class="abs" style="left:3px;top:4.800px;font-size:11.5px;letter-spacing:-0.3px">All</span><div class="abs" style="left:127px;top:0;width:19px;height:21px;background:#1e2230;border-left:2px solid #555b72"><svg class="abs" style="left:1.500px;top:6.500px" width="13" height="9" viewBox="0 0 13 9"><path d="M0.300 2.200 Q0.300 0 2.400 0.300 L6.400 3 L10.400 0.300 Q12.500 0 12.500 2.200 L6.400 8.700 Z" fill="#fff"/></svg></div></div>
<div class="abs lbl" style="left:227px;top:17px">Keywords:</div>
<div class="abs inp" style="left:292px;top:11px;width:150px;height:25px"></div>
<div class="abs btn" style="left:452px;top:10.500px;width:60px;height:25px;line-height:23px">Filter</div>
<div class="abs" style="left:519px;top:13px;width:18px;height:17.500px;border-radius:4.500px;background:#5f82bd"><div class="abs" style="left:2px;top:2px;width:14px;height:13.500px;border-radius:3px;background:linear-gradient(#a2a2a6,#88888d)"></div><svg class="abs" style="left:3.500px;top:3px" width="11" height="11" viewBox="0 0 11 11"><path d="M2 5.800 L4.500 8.300 L9 2.300" stroke="#fff" stroke-width="1.600" fill="none"/></svg></div>
<div class="abs lbl" style="left:541px;top:17px">Show disabled issues</div>
<div class="abs chk" style="left:668.500px;top:16.600px;width:11.500px;height:11.500px"></div>
<div class="abs lbl" style="left:687px;top:17px">Show closed issues</div>
<div class="abs chk" style="left:804.500px;top:16.600px;width:11.500px;height:11.500px"></div>
<div class="abs lbl" style="left:822.800px;top:17px;letter-spacing:-0.05px">Show vCenter Alerts</div>
<div class="abs btn" style="left:1475px;top:10.500px;width:120px;height:24px;line-height:22px;letter-spacing:-0.1px">Make a Wish!</div>
<div class="abs lbl" style="left:12px;top:47px">Disable Issues:</div>
<div class="abs btn dis" style="left:102px;top:41px;width:54px;height:24px;line-height:22px">Apply</div>
<div class="abs btn dis" style="left:166px;top:41px;width:55px;height:24px;line-height:22px">Reset</div>
<div class="abs" style="left:1565px;top:38px;width:30px;height:30px;background:#222736;border:1px solid #262b3a;border-radius:5px"><svg class="abs" style="left:2px;top:3.200px" width="24" height="20" viewBox="0 0 24 20"><rect x="0" y="0.5" width="4.200" height="3.800" rx="0.600" fill="#fff"/><rect x="6" y="1.2999999999999998" width="17.500" height="2.200" rx="1" fill="#fff"/><rect x="0" y="6.0" width="4.200" height="3.800" rx="0.600" fill="#fff"/><rect x="6" y="6.800000000000001" width="17.500" height="2.200" rx="1" fill="#fff"/><rect x="0" y="11.5" width="4.200" height="3.800" rx="0.600" fill="#fff"/><rect x="6" y="12.3" width="17.500" height="2.200" rx="1" fill="#fff"/><rect x="0" y="17.0" width="4.200" height="3.800" rx="0.600" fill="#fff"/><rect x="6" y="17.799999999999997" width="17.500" height="2.200" rx="1" fill="#fff"/></svg></div>
</div>
<div id="grid" class="abs">
<div class="abs hd" style="left:1px;width:25px"></div>
<div class="abs hd" style="left:27px;width:54px;padding-left:7.5px">Priority</div>
<div class="abs hd" style="left:82px;width:149px">Entity</div>
<div class="abs hd" style="left:232px;width:229px">Title</div>
<div class="abs hd" style="left:462px;width:79px">Status</div>
<div class="abs hd" style="left:542px;width:59px">Level</div>
<div class="abs hd" style="left:602px;width:119px">First Seen</div>
<div class="abs hd" style="left:722px;width:119px">Last Modified</div>
<div class="abs hd" style="left:842px;width:89px">Rate</div>
<div class="abs hd" style="left:932px;width:109px">Group</div>
<div class="abs hd" style="left:1042px;width:549px">Message</div>
<div class="abs chk" style="left:8.5px;top:9.5px;width:11.5px;height:11.5px"></div>
<div class="abs row" style="top:33px;background:#4d7266">
<div class="chk" style="left:6.5px;top:7px"></div>
<svg class="abs" style="left:49.300px;top:2px" width="15" height="18" viewBox="0 0 15 18" ><path d="M4.400 0.800 L1 16.600" stroke="#0b0c0f" stroke-width="1.600"/><path d="M1.500 16.800 H8" stroke="#000" stroke-width="0.800" opacity="0.150"/><path d="M4.800 2.900 Q8 2.900 9.700 4.700 Q11.300 6.200 13.700 6.100 L12.500 13.100 Q10 13.200 8.300 11.700 Q6.500 10.100 3.400 9.900 Z" fill="url(#f3f86e0)"/></svg>
<svg class="abs" style="left:87.800px;top:4px" width="12.2" height="13" viewBox="0 0 12.2 13" ><rect x="0.700" y="0.700" width="10.800" height="8.200" rx="1.600" fill="none" stroke="#2495d6" stroke-width="1.300"/><rect x="4" y="2.900" width="4.800" height="3.200" rx="0.800" fill="none" stroke="#1f9ae0" stroke-width="0.900"/><path d="M3.500 9.500 H8.800 L9.800 11 H2.500 Z" fill="#1c8fd8"/><path d="M1 12.300 H11.500" stroke="#bfe0f5" stroke-width="0.900" opacity="0.750"/></svg>
<div class="e">saturne</div>
<div class="s" style="left:236.500px;width:222px"><span class="k">Maximum Remote Connections</span></div>
<div class="s" style="left:465.800px"><span class="k">OPENED</span></div>
<div class="s" style="left:545.700px"><span class="k">Info</span></div>
<div class="s" style="left:606px"><span class="k">16.09.2015 23:14:04</span></div>
<div class="s" style="left:726.500px"><span class="k">17.09.2015 07:12:24</span></div>
<svg class="abs" style="left:844.900px;top:2.100px" width="82" height="18" viewBox="0 0 82 18" ><path d="M8.50 1.20 L10.97 5.90 L16.20 6.80 L12.49 10.60 L13.26 15.85 L8.50 13.50 L3.74 15.85 L4.51 10.60 L0.80 6.80 L6.03 5.90 Z" fill="url(#gy)" stroke="url(#gy)" stroke-width="0.700" stroke-linejoin="round"/><path d="M24.50 1.20 L26.97 5.90 L32.20 6.80 L28.49 10.60 L29.26 15.85 L24.50 13.50 L19.74 15.85 L20.51 10.60 L16.80 6.80 L22.03 5.90 Z" fill="url(#gy)" stroke="url(#gy)" stroke-width="0.700" stroke-linejoin="round"/><path d="M40.50 1.20 L42.97 5.90 L48.20 6.80 L44.49 10.60 L45.26 15.85 L40.50 13.50 L35.74 15.85 L36.51 10.60 L32.80 6.80 L38.03 5.90 Z" fill="url(#gs)"/><clipPath id="hc227"><rect x="32.5" y="0" width="11.2" height="18"/></clipPath><path d="M40.50 1.20 L42.97 5.90 L48.20 6.80 L44.49 10.60 L45.26 15.85 L40.50 13.50 L35.74 15.85 L36.51 10.60 L32.80 6.80 L38.03 5.90 Z" fill="url(#gy)" clip-path="url(#hc227)"/><path d="M56.50 1.20 L58.97 5.90 L64.20 6.80 L60.49 10.60 L61.26 15.85 L56.50 13.50 L51.74 15.85 L52.51 10.60 L48.80 6.80 L54.03 5.90 Z" fill="url(#gs)" stroke="url(#gs)" stroke-width="0.700" stroke-linejoin="round"/><path d="M72.50 1.20 L74.97 5.90 L80.20 6.80 L76.49 10.60 L77.26 15.85 L72.50 13.50 L67.74 15.85 L68.51 10.60 L64.80 6.80 L70.03 5.90 Z" fill="url(#gs)" stroke="url(#gs)" stroke-width="0.700" stroke-linejoin="round"/></svg>
<div class="s" style="left:936px"><span class="k">Security</span></div>
<div class="s" style="left:1046.500px;width:542px"><span class="k">Prevent other users from spying on Administrator remote consoles</span></div>
</div>
<div class="abs row" style="top:63px;background:#4d7266">
<div class="chk" style="left:6.5px;top:7px"></div>
<svg class="abs" style="left:49.300px;top:2px" width="15" height="18" viewBox="0 0 15 18" ><path d="M4.400 0.800 L1 16.600" stroke="#0b0c0f" stroke-width="1.600"/><path d="M1.500 16.800 H8" stroke="#000" stroke-width="0.800" opacity="0.150"/><path d="M4.800 2.900 Q8 2.900 9.700 4.700 Q11.300 6.200 13.700 6.100 L12.500 13.100 Q10 13.200 8.300 11.700 Q6.500 10.100 3.400 9.900 Z" fill="url(#f3f86e0)"/></svg>
<svg class="abs" style="left:87.800px;top:4px" width="12.2" height="13" viewBox="0 0 12.2 13" ><rect x="0.700" y="0.700" width="10.800" height="8.200" rx="1.600" fill="none" stroke="#2495d6" stroke-width="1.300"/><rect x="4" y="2.900" width="4.800" height="3.200" rx="0.800" fill="none" stroke="#1f9ae0" stroke-width="0.900"/><path d="M3.500 9.500 H8.800 L9.800 11 H2.500 Z" fill="#1c8fd8"/><path d="M1 12.300 H11.500" stroke="#bfe0f5" stroke-width="0.900" opacity="0.750"/></svg>
<div class="e">telechu</div>
<div class="s" style="left:236.500px;width:222px"><span class="k">Maximum Remote Connections</span></div>
<div class="s" style="left:465.800px"><span class="k">OPENED</span></div>
<div class="s" style="left:545.700px"><span class="k">Info</span></div>
<div class="s" style="left:606px"><span class="k">16.09.2015 23:14:04</span></div>
<div class="s" style="left:726.500px"><span class="k">17.09.2015 07:12:24</span></div>
<svg class="abs" style="left:844.900px;top:2.100px" width="82" height="18" viewBox="0 0 82 18" ><path d="M8.50 1.20 L10.97 5.90 L16.20 6.80 L12.49 10.60 L13.26 15.85 L8.50 13.50 L3.74 15.85 L4.51 10.60 L0.80 6.80 L6.03 5.90 Z" fill="url(#gy)" stroke="url(#gy)" stroke-width="0.700" stroke-linejoin="round"/><path d="M24.50 1.20 L26.97 5.90 L32.20 6.80 L28.49 10.60 L29.26 15.85 L24.50 13.50 L19.74 15.85 L20.51 10.60 L16.80 6.80 L22.03 5.90 Z" fill="url(#gy)" stroke="url(#gy)" stroke-width="0.700" stroke-linejoin="round"/><path d="M40.50 1.20 L42.97 5.90 L48.20 6.80 L44.49 10.60 L45.26 15.85 L40.50 13.50 L35.74 15.85 L36.51 10.60 L32.80 6.80 L38.03 5.90 Z" fill="url(#gs)"/><clipPath id="hc227"><rect x="32.5" y="0" width="11.2" height="18"/></clipPath><path d="M40.50 1.20 L42.97 5.90 L48.20 6.80 L44.49 10.60 L45.26 15.85 L40.50 13.50 L35.74 15.85 L36.51 10.60 L32.80 6.80 L38.03 5.90 Z" fill="url(#gy)" clip-path="url(#hc227)"/><path d="M56.50 1.20 L58.97 5.90 L64.20 6.80 L60.49 10.60 L61.26 15.85 L56.50 13.50 L51.74 15.85 L52.51 10.60 L48.80 6.80 L54.03 5.90 Z" fill="url(#gs)" stroke="url(#gs)" stroke-width="0.700" stroke-linejoin="round"/><path d="M72.50 1.20 L74.97 5.90 L80.20 6.80 L76.49 10.60 L77.26 15.85 L72.50 13.50 L67.74 15.85 L68.51 10.60 L64.80 6.80 L70.03 5.90 Z" fill="url(#gs)" stroke="url(#gs)" stroke-width="0.700" stroke-linejoin="round"/></svg>
<div class="s" style="left:936px"><span class="k">Security</span></div>
<div class="s" style="left:1046.500px;width:542px"><span class="k">Prevent other users from spying on Administrator remote consoles</span></div>
</div>
<div class="abs row" style="top:93px;background:#4d7266">
<div class="chk" style="left:6.5px;top:7px"></div>
<svg class="abs" style="left:49.300px;top:2px" width="15" height="18" viewBox="0 0 15 18" ><path d="M4.400 0.800 L1 16.600" stroke="#0b0c0f" stroke-width="1.600"/><path d="M1.500 16.800 H8" stroke="#000" stroke-width="0.800" opacity="0.150"/><path d="M4.800 2.900 Q8 2.900 9.700 4.700 Q11.300 6.200 13.700 6.100 L12.500 13.100 Q10 13.200 8.300 11.700 Q6.500 10.100 3.400 9.900 Z" fill="url(#f3f86e0)"/></svg>
<svg class="abs" style="left:87.800px;top:4px" width="12.2" height="13" viewBox="0 0 12.2 13" ><rect x="0.700" y="0.700" width="10.800" height="8.200" rx="1.600" fill="none" stroke="#2495d6" stroke-width="1.300"/><rect x="4" y="2.900" width="4.800" height="3.200" rx="0.800" fill="none" stroke="#1f9ae0" stroke-width="0.900"/><path d="M3.500 9.500 H8.800 L9.800 11 H2.500 Z" fill="#1c8fd8"/><path d="M1 12.300 H11.500" stroke="#bfe0f5" stroke-width="0.900" opacity="0.750"/></svg>
<div class="e">mercure_failover</div>
<div class="s" style="left:236.500px;width:222px"><span class="k">Maximum Remote Connections</span></div>
<div class="s" style="left:465.800px"><span class="k">OPENED</span></div>
<div class="s" style="left:545.700px"><span class="k">Info</span></div>
<div class="s" style="left:606px"><span class="k">16.09.2015 23:14:04</span></div>
<div class="s" style="left:726.500px"><span class="k">17.09.2015 07:12:24</span></div>
<svg class="abs" style="left:844.900px;top:2.100px" width="82" height="18" viewBox="0 0 82 18" ><path d="M8.50 1.20 L10.97 5.90 L16.20 6.80 L12.49 10.60 L13.26 15.85 L8.50 13.50 L3.74 15.85 L4.51 10.60 L0.80 6.80 L6.03 5.90 Z" fill="url(#gy)" stroke="url(#gy)" stroke-width="0.700" stroke-linejoin="round"/><path d="M24.50 1.20 L26.97 5.90 L32.20 6.80 L28.49 10.60 L29.26 15.85 L24.50 13.50 L19.74 15.85 L20.51 10.60 L16.80 6.80 L22.03 5.90 Z" fill="url(#gy)" stroke="url(#gy)" stroke-width="0.700" stroke-linejoin="round"/><path d="M40.50 1.20 L42.97 5.90 L48.20 6.80 L44.49 10.60 L45.26 15.85 L40.50 13.50 L35.74 15.85 L36.51 10.60 L32.80 6.80 L38.03 5.90 Z" fill="url(#gs)"/><clipPath id="hc227"><rect x="32.5" y="0" width="11.2" height="18"/></clipPath><path d="M40.50 1.20 L42.97 5.90 L48.20 6.80 L44.49 10.60 L45.26 15.85 L40.50 13.50 L35.74 15.85 L36.51 10.60 L32.80 6.80 L38.03 5.90 Z" fill="url(#gy)" clip-path="url(#hc227)"/><path d="M56.50 1.20 L58.97 5.90 L64.20 6.80 L60.49 10.60 L61.26 15.85 L56.50 13.50 L51.74 15.85 L52.51 10.60 L48.80 6.80 L54.03 5.90 Z" fill="url(#gs)" stroke="url(#gs)" stroke-width="0.700" stroke-linejoin="round"/><path d="M72.50 1.20 L74.97 5.90 L80.20 6.80 L76.49 10.60 L77.26 15.85 L72.50 13.50 L67.74 15.85 L68.51 10.60 L64.80 6.80 L70.03 5.90 Z" fill="url(#gs)" stroke="url(#gs)" stroke-width="0.700" stroke-linejoin="round"/></svg>
<div class="s" style="left:936px"><span class="k">Security</span></div>
<div class="s" style="left:1046.500px;width:542px"><span class="k">Prevent other users from spying on Administrator remote consoles</span></div>
</div>
<div class="abs row" style="top:123px;background:#4d7266">
<div class="chk" style="left:6.5px;top:7px"></div>
<svg class="abs" style="left:49.300px;top:2px" width="15" height="18" viewBox="0 0 15 18" ><path d="M4.400 0.800 L1 16.600" stroke="#0b0c0f" stroke-width="1.600"/><path d="M1.500 16.800 H8" stroke="#000" stroke-width="0.800" opacity="0.150"/><path d="M4.800 2.900 Q8 2.900 9.700 4.700 Q11.300 6.200 13.700 6.100 L12.500 13.100 Q10 13.200 8.300 11.700 Q6.500 10.100 3.400 9.900 Z" fill="url(#f3f86e0)"/></svg>
<svg class="abs" style="left:87.800px;top:4px" width="12.2" height="13" viewBox="0 0 12.2 13" ><rect x="0.700" y="0.700" width="10.800" height="8.200" rx="1.600" fill="none" stroke="#2495d6" stroke-width="1.300"/><rect x="4" y="2.900" width="4.800" height="3.200" rx="0.800" fill="none" stroke="#1f9ae0" stroke-width="0.900"/><path d="M3.500 9.500 H8.800 L9.800 11 H2.500 Z" fill="#1c8fd8"/><path d="M1 12.300 H11.500" stroke="#bfe0f5" stroke-width="0.900" opacity="0.750"/></svg>
<div class="e">vcenter</div>
<div class="s" style="left:236.500px;width:222px"><span class="k">Maximum Remote Connections</span></div>
<div class="s" style="left:465.800px"><span class="k">OPENED</span></div>
<div class="s" style="left:545.700px"><span class="k">Info</span></div>
<div class="s" style="left:606px"><span class="k">16.09.2015 23:14:04</span></div>
<div class="s" style="left:726.500px"><span class="k">17.09.2015 07:12:24</span></div>
<svg class="abs" style="left:844.900px;top:2.100px" width="82" height="18" viewBox="0 0 82 18" ><path d="M8.50 1.20 L10.97 5.90 L16.20 6.80 L12.49 10.60 L13.26 15.85 L8.50 13.50 L3.74 15.85 L4.51 10.60 L0.80 6.80 L6.03 5.90 Z" fill="url(#gy)" stroke="url(#gy)" stroke-width="0.700" stroke-linejoin="round"/><path d="M24.50 1.20 L26.97 5.90 L32.20 6.80 L28.49 10.60 L29.26 15.85 L24.50 13.50 L19.74 15.85 L20.51 10.60 L16.80 6.80 L22.03 5.90 Z" fill="url(#gy)" stroke="url(#gy)" stroke-width="0.700" stroke-linejoin="round"/><path d="M40.50 1.20 L42.97 5.90 L48.20 6.80 L44.49 10.60 L45.26 15.85 L40.50 13.50 L35.74 15.85 L36.51 10.60 L32.80 6.80 L38.03 5.90 Z" fill="url(#gs)"/><clipPath id="hc227"><rect x="32.5" y="0" width="11.2" height="18"/></clipPath><path d="M40.50 1.20 L42.97 5.90 L48.20 6.80 L44.49 10.60 L45.26 15.85 L40.50 13.50 L35.74 15.85 L36.51 10.60 L32.80 6.80 L38.03 5.90 Z" fill="url(#gy)" clip-path="url(#hc227)"/><path d="M56.50 1.20 L58.97 5.90 L64.20 6.80 L60.49 10.60 L61.26 15.85 L56.50 13.50 L51.74 15.85 L52.51 10.60 L48.80 6.80 L54.03 5.90 Z" fill="url(#gs)" stroke="url(#gs)" stroke-width="0.700" stroke-linejoin="round"/><path d="M72.50 1.20 L74.97 5.90 L80.20 6.80 L76.49 10.60 L77.26 15.85 L72.50 13.50 L67.74 15.85 L68.51 10.60 L64.80 6.80 L70.03 5.90 Z" fill="url(#gs)" stroke="url(#gs)" stroke-width="0.700" stroke-linejoin="round"/></svg>
<div class="s" style="left:936px"><span class="k">Security</span></div>
<div class="s" style="left:1046.500px;width:542px"><span class="k">Prevent other users from spying on Administrator remote consoles</span></div>
</div>
<div class="abs row" style="top:153px;background:#4d7266">
<div class="chk" style="left:6.5px;top:7px"></div>
<svg class="abs" style="left:49.300px;top:2px" width="15" height="18" viewBox="0 0 15 18" ><path d="M4.400 0.800 L1 16.600" stroke="#0b0c0f" stroke-width="1.600"/><path d="M1.500 16.800 H8" stroke="#000" stroke-width="0.800" opacity="0.150"/><path d="M4.800 2.900 Q8 2.900 9.700 4.700 Q11.300 6.200 13.700 6.100 L12.500 13.100 Q10 13.200 8.300 11.700 Q6.500 10.100 3.400 9.900 Z" fill="url(#f3f86e0)"/></svg>
<svg class="abs" style="left:87.800px;top:4px" width="12.2" height="13" viewBox="0 0 12.2 13" ><rect x="0.700" y="0.700" width="10.800" height="8.200" rx="1.600" fill="none" stroke="#2495d6" stroke-width="1.300"/><rect x="4" y="2.900" width="4.800" height="3.200" rx="0.800" fill="none" stroke="#1f9ae0" stroke-width="0.900"/><path d="M3.500 9.500 H8.800 L9.800 11 H2.500 Z" fill="#1c8fd8"/><path d="M1 12.300 H11.500" stroke="#bfe0f5" stroke-width="0.900" opacity="0.750"/></svg>
<div class="e">europe</div>
<div class="s" style="left:236.500px;width:222px"><span class="k">Maximum Remote Connections</span></div>
<div class="s" style="left:465.800px"><span class="k">OPENED</span></div>
<div class="s" style="left:545.700px"><span class="k">Info</span></div>
<div class="s" style="left:606px"><span class="k">16.09.2015 23:14:04</span></div>
<div class="s" style="left:726.500px"><span class="k">17.09.2015 07:12:24</span></div>
<svg class="abs" style="left:844.900px;top:2.100px" width="82" height="18" viewBox="0 0 82 18" ><path d="M8.50 1.20 L10.97 5.90 L16.20 6.80 L12.49 10.60 L13.26 15.85 L8.50 13.50 L3.74 15.85 L4.51 10.60 L0.80 6.80 L6.03 5.90 Z" fill="url(#gy)" stroke="url(#gy)" stroke-width="0.700" stroke-linejoin="round"/><path d="M24.50 1.20 L26.97 5.90 L32.20 6.80 L28.49 10.60 L29.26 15.85 L24.50 13.50 L19.74 15.85 L20.51 10.60 L16.80 6.80 L22.03 5.90 Z" fill="url(#gy)" stroke="url(#gy)" stroke-width="0.700" stroke-linejoin="round"/><path d="M40.50 1.20 L42.97 5.90 L48.20 6.80 L44.49 10.60 L45.26 15.85 L40.50 13.50 L35.74 15.85 L36.51 10.60 L32.80 6.80 L38.03 5.90 Z" fill="url(#gs)"/><clipPath id="hc227"><rect x="32.5" y="0" width="11.2" height="18"/></clipPath><path d="M40.50 1.20 L42.97 5.90 L48.20 6.80 L44.49 10.60 L45.26 15.85 L40.50 13.50 L35.74 15.85 L36.51 10.60 L32.80 6.80 L38.03 5.90 Z" fill="url(#gy)" clip-path="url(#hc227)"/><path d="M56.50 1.20 L58.97 5.90 L64.20 6.80 L60.49 10.60 L61.26 15.85 L56.50 13.50 L51.74 15.85 L52.51 10.60 L48.80 6.80 L54.03 5.90 Z" fill="url(#gs)" stroke="url(#gs)" stroke-width="0.700" stroke-linejoin="round"/><path d="M72.50 1.20 L74.97 5.90 L80.20 6.80 L76.49 10.60 L77.26 15.85 L72.50 13.50 L67.74 15.85 L68.51 10.60 L64.80 6.80 L70.03 5.90 Z" fill="url(#gs)" stroke="url(#gs)" stroke-width="0.700" stroke-linejoin="round"/></svg>
<div class="s" style="left:936px"><span class="k">Security</span></div>
<div class="s" style="left:1046.500px;width:542px"><span class="k">Prevent other users from spying on Administrator remote consoles</span></div>
</div>
<div class="abs row" style="top:183px;background:#4d7266">
<div class="chk" style="left:6.5px;top:7px"></div>
<svg class="abs" style="left:49.300px;top:2px" width="15" height="18" viewBox="0 0 15 18" ><path d="M4.400 0.800 L1 16.600" stroke="#0b0c0f" stroke-width="1.600"/><path d="M1.500 16.800 H8" stroke="#000" stroke-width="0.800" opacity="0.150"/><path d="M4.800 2.900 Q8 2.900 9.700 4.700 Q11.300 6.200 13.700 6.100 L12.500 13.100 Q10 13.200 8.300 11.700 Q6.500 10.100 3.400 9.900 Z" fill="url(#f3f86e0)"/></svg>
<svg class="abs" style="left:87.800px;top:4px" width="12.2" height="13" viewBox="0 0 12.2 13" ><rect x="0.700" y="0.700" width="10.800" height="8.200" rx="1.600" fill="none" stroke="#2495d6" stroke-width="1.300"/><rect x="4" y="2.900" width="4.800" height="3.200" rx="0.800" fill="none" stroke="#1f9ae0" stroke-width="0.900"/><path d="M3.500 9.500 H8.800 L9.800 11 H2.500 Z" fill="#1c8fd8"/><path d="M1 12.300 H11.500" stroke="#bfe0f5" stroke-width="0.900" opacity="0.750"/></svg>
<div class="e">oxygene</div>
<div class="s" style="left:236.500px;width:222px"><span class="k">Maximum Remote Connections</span></div>
<div class="s" style="left:465.800px"><span class="k">OPENED</span></div>
<div class="s" style="left:545.700px"><span class="k">Info</span></div>
<div class="s" style="left:606px"><span class="k">16.09.2015 23:14:04</span></div>
<div class="s" style="left:726.500px"><span class="k">17.09.2015 07:12:25</span></div>
<svg class="abs" style="left:844.900px;top:2.100px" width="82" height="18" viewBox="0 0 82 18" ><path d="M8.50 1.20 L10.97 5.90 L16.20 6.80 L12.49 10.60 L13.26 15.85 L8.50 13.50 L3.74 15.85 L4.51 10.60 L0.80 6.80 L6.03 5.90 Z" fill="url(#gy)" stroke="url(#gy)" stroke-width="0.700" stroke-linejoin="round"/><path d="M24.50 1.20 L26.97 5.90 L32.20 6.80 L28.49 10.60 L29.26 15.85 L24.50 13.50 L19.74 15.85 L20.51 10.60 L16.80 6.80 L22.03 5.90 Z" fill="url(#gy)" stroke="url(#gy)" stroke-width="0.700" stroke-linejoin="round"/><path d="M40.50 1.20 L42.97 5.90 L48.20 6.80 L44.49 10.60 L45.26 15.85 L40.50 13.50 L35.74 15.85 L36.51 10.60 L32.80 6.80 L38.03 5.90 Z" fill="url(#gs)"/><clipPath id="hc227"><rect x="32.5" y="0" width="11.2" height="18"/></clipPath><path d="M40.50 1.20 L42.97 5.90 L48.20 6.80 L44.49 10.60 L45.26 15.85 L40.50 13.50 L35.74 15.85 L36.51 10.60 L32.80 6.80 L38.03 5.90 Z" fill="url(#gy)" clip-path="url(#hc227)"/><path d="M56.50 1.20 L58.97 5.90 L64.20 6.80 L60.49 10.60 L61.26 15.85 L56.50 13.50 L51.74 15.85 L52.51 10.60 L48.80 6.80 L54.03 5.90 Z" fill="url(#gs)" stroke="url(#gs)" stroke-width="0.700" stroke-linejoin="round"/><path d="M72.50 1.20 L74.97 5.90 L80.20 6.80 L76.49 10.60 L77.26 15.85 L72.50 13.50 L67.74 15.85 L68.51 10.60 L64.80 6.80 L70.03 5.90 Z" fill="url(#gs)" stroke="url(#gs)" stroke-width="0.700" stroke-linejoin="round"/></svg>
<div class="s" style="left:936px"><span class="k">Security</span></div>
<div class="s" style="left:1046.500px;width:542px"><span class="k">Prevent other users from spying on Administrator remote consoles</span></div>
</div>
<div class="abs row" style="top:213px;background:#4d7266">
<div class="chk" style="left:6.5px;top:7px"></div>
<svg class="abs" style="left:49.300px;top:2px" width="15" height="18" viewBox="0 0 15 18" ><path d="M4.400 0.800 L1 16.600" stroke="#0b0c0f" stroke-width="1.600"/><path d="M1.500 16.800 H8" stroke="#000" stroke-width="0.800" opacity="0.150"/><path d="M4.800 2.900 Q8 2.900 9.700 4.700 Q11.300 6.200 13.700 6.100 L12.500 13.100 Q10 13.200 8.300 11.700 Q6.500 10.100 3.400 9.900 Z" fill="url(#f3f86e0)"/></svg>
<svg class="abs" style="left:87.800px;top:4px" width="12.2" height="13" viewBox="0 0 12.2 13" ><rect x="0.700" y="0.700" width="10.800" height="8.200" rx="1.600" fill="none" stroke="#2495d6" stroke-width="1.300"/><rect x="4" y="2.900" width="4.800" height="3.200" rx="0.800" fill="none" stroke="#1f9ae0" stroke-width="0.900"/><path d="M3.500 9.500 H8.800 L9.800 11 H2.500 Z" fill="#1c8fd8"/><path d="M1 12.300 H11.500" stroke="#bfe0f5" stroke-width="0.900" opacity="0.750"/></svg>
<div class="e">pinpin</div>
<div class="s" style="left:236.500px;width:222px"><span class="k">Maximum Remote Connections</span></div>
<div class="s" style="left:465.800px"><span class="k">OPENED</span></div>
<div class="s" style="left:545.700px"><span class="k">Info</span></div>
<div class="s" style="left:606px"><span class="k">16.09.2015 23:14:04</span></div>
<div class="s" style="left:726.500px"><span class="k">17.09.2015 07:12:25</span></div>
<svg class="abs" style="left:844.900px;top:2.100px" width="82" height="18" viewBox="0 0 82 18" ><path d="M8.50 1.20 L10.97 5.90 L16.20 6.80 L12.49 10.60 L13.26 15.85 L8.50 13.50 L3.74 15.85 L4.51 10.60 L0.80 6.80 L6.03 5.90 Z" fill="url(#gy)" stroke="url(#gy)" stroke-width="0.700" stroke-linejoin="round"/><path d="M24.50 1.20 L26.97 5.90 L32.20 6.80 L28.49 10.60 L29.26 15.85 L24.50 13.50 L19.74 15.85 L20.51 10.60 L16.80 6.80 L22.03 5.90 Z" fill="url(#gy)" stroke="url(#gy)" stroke-width="0.700" stroke-linejoin="round"/><path d="M40.50 1.20 L42.97 5.90 L48.20 6.80 L44.49 10.60 L45.26 15.85 L40.50 13.50 L35.74 15.85 L36.51 10.60 L32.80 6.80 L38.03 5.90 Z" fill="url(#gs)"/><clipPath id="hc227"><rect x="32.5" y="0" width="11.2" height="18"/></clipPath><path d="M40.50 1.20 L42.97 5.90 L48.20 6.80 L44.49 10.60 L45.26 15.85 L40.50 13.50 L35.74 15.85 L36.51 10.60 L32.80 6.80 L38.03 5.90 Z" fill="url(#gy)" clip-path="url(#hc227)"/><path d="M56.50 1.20 L58.97 5.90 L64.20 6.80 L60.49 10.60 L61.26 15.85 L56.50 13.50 L51.74 15.85 L52.51 10.60 L48.80 6.80 L54.03 5.90 Z" fill="url(#gs)" stroke="url(#gs)" stroke-width="0.700" stroke-linejoin="round"/><path d="M72.50 1.20 L74.97 5.90 L80.20 6.80 L76.49 10.60 L77.26 15.85 L72.50 13.50 L67.74 15.85 L68.51 10.60 L64.80 6.80 L70.03 5.90 Z" fill="url(#gs)" stroke="url(#gs)" stroke-width="0.700" stroke-linejoin="round"/></svg>
<div class="s" style="left:936px"><span class="k">Security</span></div>
<div class="s" style="left:1046.500px;width:542px"><span class="k">Prevent other users from spying on Administrator remote consoles</span></div>
</div>
<div class="abs row" style="top:243px;background:#4d7266">
<div class="chk" style="left:6.5px;top:7px"></div>
<svg class="abs" style="left:49.300px;top:2px" width="15" height="18" viewBox="0 0 15 18" ><path d="M4.400 0.800 L1 16.600" stroke="#0b0c0f" stroke-width="1.600"/><path d="M1.500 16.800 H8" stroke="#000" stroke-width="0.800" opacity="0.150"/><path d="M4.800 2.900 Q8 2.900 9.700 4.700 Q11.300 6.200 13.700 6.100 L12.500 13.100 Q10 13.200 8.300 11.700 Q6.500 10.100 3.400 9.900 Z" fill="url(#f3f86e0)"/></svg>
<svg class="abs" style="left:87.800px;top:4px" width="12.2" height="13" viewBox="0 0 12.2 13" ><rect x="0.700" y="0.700" width="10.800" height="8.200" rx="1.600" fill="none" stroke="#2495d6" stroke-width="1.300"/><rect x="4" y="2.900" width="4.800" height="3.200" rx="0.800" fill="none" stroke="#1f9ae0" stroke-width="0.900"/><path d="M3.500 9.500 H8.800 L9.800 11 H2.500 Z" fill="#1c8fd8"/><path d="M1 12.300 H11.500" stroke="#bfe0f5" stroke-width="0.900" opacity="0.750"/></svg>
<div class="e">veeam</div>
<div class="s" style="left:236.500px;width:222px"><span class="k">Maximum Remote Connections</span></div>
<div class="s" style="left:465.800px"><span class="k">OPENED</span></div>
<div class="s" style="left:545.700px"><span class="k">Info</span></div>
<div class="s" style="left:606px"><span class="k">16.09.2015 23:14:04</span></div>
<div class="s" style="left:726.500px"><span class="k">17.09.2015 07:12:25</span></div>
<svg class="abs" style="left:844.900px;top:2.100px" width="82" height="18" viewBox="0 0 82 18" ><path d="M8.50 1.20 L10.97 5.90 L16.20 6.80 L12.49 10.60 L13.26 15.85 L8.50 13.50 L3.74 15.85 L4.51 10.60 L0.80 6.80 L6.03 5.90 Z" fill="url(#gy)" stroke="url(#gy)" stroke-width="0.700" stroke-linejoin="round"/><path d="M24.50 1.20 L26.97 5.90 L32.20 6.80 L28.49 10.60 L29.26 15.85 L24.50 13.50 L19.74 15.85 L20.51 10.60 L16.80 6.80 L22.03 5.90 Z" fill="url(#gy)" stroke="url(#gy)" stroke-width="0.700" stroke-linejoin="round"/><path d="M40.50 1.20 L42.97 5.90 L48.20 6.80 L44.49 10.60 L45.26 15.85 L40.50 13.50 L35.74 15.85 L36.51 10.60 L32.80 6.80 L38.03 5.90 Z" fill="url(#gs)"/><clipPath id="hc227"><rect x="32.5" y="0" width="11.2" height="18"/></clipPath><path d="M40.50 1.20 L42.97 5.90 L48.20 6.80 L44.49 10.60 L45.26 15.85 L40.50 13.50 L35.74 15.85 L36.51 10.60 L32.80 6.80 L38.03 5.90 Z" fill="url(#gy)" clip-path="url(#hc227)"/><path d="M56.50 1.20 L58.97 5.90 L64.20 6.80 L60.49 10.60 L61.26 15.85 L56.50 13.50 L51.74 15.85 L52.51 10.60 L48.80 6.80 L54.03 5.90 Z" fill="url(#gs)" stroke="url(#gs)" stroke-width="0.700" stroke-linejoin="round"/><path d="M72.50 1.20 L74.97 5.90 L80.20 6.80 L76.49 10.60 L77.26 15.85 L72.50 13.50 L67.74 15.85 L68.51 10.60 L64.80 6.80 L70.03 5.90 Z" fill="url(#gs)" stroke="url(#gs)" stroke-width="0.700" stroke-linejoin="round"/></svg>
<div class="s" style="left:936px"><span class="k">Security</span></div>
<div class="s" style="left:1046.500px;width:542px"><span class="k">Prevent other users from spying on Administrator remote consoles</span></div>
</div>
<div class="abs row" style="top:273px;background:#4d7266">
<div class="chk" style="left:6.5px;top:7px"></div>
<svg class="abs" style="left:49.300px;top:2px" width="15" height="18" viewBox="0 0 15 18" ><path d="M4.400 0.800 L1 16.600" stroke="#0b0c0f" stroke-width="1.600"/><path d="M1.500 16.800 H8" stroke="#000" stroke-width="0.800" opacity="0.150"/><path d="M4.800 2.900 Q8 2.900 9.700 4.700 Q11.300 6.200 13.700 6.100 L12.500 13.100 Q10 13.200 8.300 11.700 Q6.500 10.100 3.400 9.900 Z" fill="url(#f3f86e0)"/></svg>
<svg class="abs" style="left:87.800px;top:4px" width="12.2" height="13" viewBox="0 0 12.2 13" ><rect x="0.700" y="0.700" width="10.800" height="8.200" rx="1.600" fill="none" stroke="#2495d6" stroke-width="1.300"/><rect x="4" y="2.900" width="4.800" height="3.200" rx="0.800" fill="none" stroke="#1f9ae0" stroke-width="0.900"/><path d="M3.500 9.500 H8.800 L9.800 11 H2.500 Z" fill="#1c8fd8"/><path d="M1 12.300 H11.500" stroke="#bfe0f5" stroke-width="0.900" opacity="0.750"/></svg>
<div class="e">secdns</div>
<div class="s" style="left:236.500px;width:222px"><span class="k">Maximum Remote Connections</span></div>
<div class="s" style="left:465.800px"><span class="k">OPENED</span></div>
<div class="s" style="left:545.700px"><span class="k">Info</span></div>
<div class="s" style="left:606px"><span class="k">16.09.2015 23:14:04</span></div>
<div class="s" style="left:726.500px"><span class="k">17.09.2015 07:12:25</span></div>
<svg class="abs" style="left:844.900px;top:2.100px" width="82" height="18" viewBox="0 0 82 18" ><path d="M8.50 1.20 L10.97 5.90 L16.20 6.80 L12.49 10.60 L13.26 15.85 L8.50 13.50 L3.74 15.85 L4.51 10.60 L0.80 6.80 L6.03 5.90 Z" fill="url(#gy)" stroke="url(#gy)" stroke-width="0.700" stroke-linejoin="round"/><path d="M24.50 1.20 L26.97 5.90 L32.20 6.80 L28.49 10.60 L29.26 15.85 L24.50 13.50 L19.74 15.85 L20.51 10.60 L16.80 6.80 L22.03 5.90 Z" fill="url(#gy)" stroke="url(#gy)" stroke-width="0.700" stroke-linejoin="round"/><path d="M40.50 1.20 L42.97 5.90 L48.20 6.80 L44.49 10.60 L45.26 15.85 L40.50 13.50 L35.74 15.85 L36.51 10.60 L32.80 6.80 L38.03 5.90 Z" fill="url(#gs)"/><clipPath id="hc227"><rect x="32.5" y="0" width="11.2" height="18"/></clipPath><path d="M40.50 1.20 L42.97 5.90 L48.20 6.80 L44.49 10.60 L45.26 15.85 L40.50 13.50 L35.74 15.85 L36.51 10.60 L32.80 6.80 L38.03 5.90 Z" fill="url(#gy)" clip-path="url(#hc227)"/><path d="M56.50 1.20 L58.97 5.90 L64.20 6.80 L60.49 10.60 L61.26 15.85 L56.50 13.50 L51.74 15.85 L52.51 10.60 L48.80 6.80 L54.03 5.90 Z" fill="url(#gs)" stroke="url(#gs)" stroke-width="0.700" stroke-linejoin="round"/><path d="M72.50 1.20 L74.97 5.90 L80.20 6.80 L76.49 10.60 L77.26 15.85 L72.50 13.50 L67.74 15.85 L68.51 10.60 L64.80 6.80 L70.03 5.90 Z" fill="url(#gs)" stroke="url(#gs)" stroke-width="0.700" stroke-linejoin="round"/></svg>
<div class="s" style="left:936px"><span class="k">Security</span></div>
<div class="s" style="left:1046.500px;width:542px"><span class="k">Prevent other users from spying on Administrator remote consoles</span></div>
</div>
<div class="abs row" style="top:303px;background:#4d7266">
<div class="chk" style="left:6.5px;top:7px"></div>
<svg class="abs" style="left:49.300px;top:2px" width="15" height="18" viewBox="0 0 15 18" ><path d="M4.400 0.800 L1 16.600" stroke="#0b0c0f" stroke-width="1.600"/><path d="M1.500 16.800 H8" stroke="#000" stroke-width="0.800" opacity="0.150"/><path d="M4.800 2.900 Q8 2.900 9.700 4.700 Q11.300 6.200 13.700 6.100 L12.500 13.100 Q10 13.200 8.300 11.700 Q6.500 10.100 3.400 9.900 Z" fill="url(#f3f86e0)"/></svg>
<svg class="abs" style="left:87.800px;top:4px" width="12.2" height="13" viewBox="0 0 12.2 13" ><rect x="0.700" y="0.700" width="10.800" height="8.200" rx="1.600" fill="none" stroke="#2495d6" stroke-width="1.300"/><rect x="4" y="2.900" width="4.800" height="3.200" rx="0.800" fill="none" stroke="#1f9ae0" stroke-width="0.900"/><path d="M3.500 9.500 H8.800 L9.800 11 H2.500 Z" fill="#1c8fd8"/><path d="M1 12.300 H11.500" stroke="#bfe0f5" stroke-width="0.900" opacity="0.750"/></svg>
<div class="e">vcd</div>
<div class="s" style="left:236.500px;width:222px"><span class="k">Maximum Remote Connections</span></div>
<div class="s" style="left:465.800px"><span class="k">OPENED</span></div>
<div class="s" style="left:545.700px"><span class="k">Info</span></div>
<div class="s" style="left:606px"><span class="k">16.09.2015 23:14:04</span></div>
<div class="s" style="left:726.500px"><span class="k">17.09.2015 07:12:26</span></div>
<svg class="abs" style="left:844.900px;top:2.100px" width="82" height="18" viewBox="0 0 82 18" ><path d="M8.50 1.20 L10.97 5.90 L16.20 6.80 L12.49 10.60 L13.26 15.85 L8.50 13.50 L3.74 15.85 L4.51 10.60 L0.80 6.80 L6.03 5.90 Z" fill="url(#gy)" stroke="url(#gy)" stroke-width="0.700" stroke-linejoin="round"/><path d="M24.50 1.20 L26.97 5.90 L32.20 6.80 L28.49 10.60 L29.26 15.85 L24.50 13.50 L19.74 15.85 L20.51 10.60 L16.80 6.80 L22.03 5.90 Z" fill="url(#gy)" stroke="url(#gy)" stroke-width="0.700" stroke-linejoin="round"/><path d="M40.50 1.20 L42.97 5.90 L48.20 6.80 L44.49 10.60 L45.26 15.85 L40.50 13.50 L35.74 15.85 L36.51 10.60 L32.80 6.80 L38.03 5.90 Z" fill="url(#gs)"/><clipPath id="hc227"><rect x="32.5" y="0" width="11.2" height="18"/></clipPath><path d="M40.50 1.20 L42.97 5.90 L48.20 6.80 L44.49 10.60 L45.26 15.85 L40.50 13.50 L35.74 15.85 L36.51 10.60 L32.80 6.80 L38.03 5.90 Z" fill="url(#gy)" clip-path="url(#hc227)"/><path d="M56.50 1.20 L58.97 5.90 L64.20 6.80 L60.49 10.60 L61.26 15.85 L56.50 13.50 L51.74 15.85 L52.51 10.60 L48.80 6.80 L54.03 5.90 Z" fill="url(#gs)" stroke="url(#gs)" stroke-width="0.700" stroke-linejoin="round"/><path d="M72.50 1.20 L74.97 5.90 L80.20 6.80 L76.49 10.60 L77.26 15.85 L72.50 13.50 L67.74 15.85 L68.51 10.60 L64.80 6.80 L70.03 5.90 Z" fill="url(#gs)" stroke="url(#gs)" stroke-width="0.700" stroke-linejoin="round"/></svg>
<div class="s" style="left:936px"><span class="k">Security</span></div>
<div class="s" style="left:1046.500px;width:542px"><span class="k">Prevent other users from spying on Administrator remote consoles</span></div>
</div>
<div class="abs row" style="top:333px;background:#4d7266">
<div class="chk" style="left:6.5px;top:7px"></div>
<svg class="abs" style="left:49.300px;top:2px" width="15" height="18" viewBox="0 0 15 18" ><path d="M4.400 0.800 L1 16.600" stroke="#0b0c0f" stroke-width="1.600"/><path d="M1.500 16.800 H8" stroke="#000" stroke-width="0.800" opacity="0.150"/><path d="M4.800 2.900 Q8 2.900 9.700 4.700 Q11.300 6.200 13.700 6.100 L12.500 13.100 Q10 13.200 8.300 11.700 Q6.500 10.100 3.400 9.900 Z" fill="url(#f3f86e0)"/></svg>
<svg class="abs" style="left:87.800px;top:4px" width="12.2" height="13" viewBox="0 0 12.2 13" ><rect x="0.700" y="0.700" width="10.800" height="8.200" rx="1.600" fill="none" stroke="#2495d6" stroke-width="1.300"/><rect x="4" y="2.900" width="4.800" height="3.200" rx="0.800" fill="none" stroke="#1f9ae0" stroke-width="0.900"/><path d="M3.500 9.500 H8.800 L9.800 11 H2.500 Z" fill="#1c8fd8"/><path d="M1 12.300 H11.500" stroke="#bfe0f5" stroke-width="0.900" opacity="0.750"/></svg>
<div class="e">mercure</div>
<div class="s" style="left:236.500px;width:222px"><span class="k">Maximum Remote Connections</span></div>
<div class="s" style="left:465.800px"><span class="k">OPENED</span></div>
<div class="s" style="left:545.700px"><span class="k">Info</span></div>
<div class="s" style="left:606px"><span class="k">16.09.2015 23:14:04</span></div>
<div class="s" style="left:726.500px"><span class="k">17.09.2015 07:12:26</span></div>
<svg class="abs" style="left:844.900px;top:2.100px" width="82" height="18" viewBox="0 0 82 18" ><path d="M8.50 1.20 L10.97 5.90 L16.20 6.80 L12.49 10.60 L13.26 15.85 L8.50 13.50 L3.74 15.85 L4.51 10.60 L0.80 6.80 L6.03 5.90 Z" fill="url(#gy)" stroke="url(#gy)" stroke-width="0.700" stroke-linejoin="round"/><path d="M24.50 1.20 L26.97 5.90 L32.20 6.80 L28.49 10.60 L29.26 15.85 L24.50 13.50 L19.74 15.85 L20.51 10.60 L16.80 6.80 L22.03 5.90 Z" fill="url(#gy)" stroke="url(#gy)" stroke-width="0.700" stroke-linejoin="round"/><path d="M40.50 1.20 L42.97 5.90 L48.20 6.80 L44.49 10.60 L45.26 15.85 L40.50 13.50 L35.74 15.85 L36.51 10.60 L32.80 6.80 L38.03 5.90 Z" fill="url(#gs)"/><clipPath id="hc227"><rect x="32.5" y="0" width="11.2" height="18"/></clipPath><path d="M40.50 1.20 L42.97 5.90 L48.20 6.80 L44.49 10.60 L45.26 15.85 L40.50 13.50 L35.74 15.85 L36.51 10.60 L32.80 6.80 L38.03 5.90 Z" fill="url(#gy)" clip-path="url(#hc227)"/><path d="M56.50 1.20 L58.97 5.90 L64.20 6.80 L60.49 10.60 L61.26 15.85 L56.50 13.50 L51.74 15.85 L52.51 10.60 L48.80 6.80 L54.03 5.90 Z" fill="url(#gs)" stroke="url(#gs)" stroke-width="0.700" stroke-linejoin="round"/><path d="M72.50 1.20 L74.97 5.90 L80.20 6.80 L76.49 10.60 L77.26 15.85 L72.50 13.50 L67.74 15.85 L68.51 10.60 L64.80 6.80 L70.03 5.90 Z" fill="url(#gs)" stroke="url(#gs)" stroke-width="0.700" stroke-linejoin="round"/></svg>
<div class="s" style="left:936px"><span class="k">Security</span></div>
<div class="s" style="left:1046.500px;width:542px"><span class="k">Prevent other users from spying on Administrator remote consoles</span></div>
</div>
<div class="abs row" style="top:363px;background:#c17207">
<div class="chk" style="left:6.5px;top:7px"></div>
<svg class="abs" style="left:49.300px;top:2px" width="15" height="18" viewBox="0 0 15 18" ><path d="M4.400 0.800 L1 16.600" stroke="#0b0c0f" stroke-width="1.600"/><path d="M1.500 16.800 H8" stroke="#000" stroke-width="0.800" opacity="0.150"/><path d="M4.800 2.900 Q8 2.900 9.700 4.700 Q11.300 6.200 13.700 6.100 L12.500 13.100 Q10 13.200 8.300 11.700 Q6.500 10.100 3.400 9.900 Z" fill="url(#f74c52c)"/></svg>
<svg class="abs" style="left:87.800px;top:4px" width="12.2" height="13" viewBox="0 0 12.2 13" ><rect x="0.700" y="0.700" width="10.800" height="8.200" rx="1.600" fill="none" stroke="#2495d6" stroke-width="1.300"/><rect x="4" y="2.900" width="4.800" height="3.200" rx="0.800" fill="none" stroke="#1f9ae0" stroke-width="0.900"/><path d="M3.500 9.500 H8.800 L9.800 11 H2.500 Z" fill="#1c8fd8"/><path d="M1 12.300 H11.500" stroke="#bfe0f5" stroke-width="0.900" opacity="0.750"/></svg>
<div class="e">telechu</div>
<div class="s" style="left:236.500px;width:222px"><span class="k">Virtual Devices</span></div>
<div class="s" style="left:465.800px"><span class="k">OPENED</span></div>
<div class="s" style="left:545.700px"><span class="k">Warning</span></div>
<div class="s" style="left:606px"><span class="k">16.09.2015 23:14:04</span></div>
<div class="s" style="left:726.500px"><span class="k">17.09.2015 07:11:12</span></div>
<svg class="abs" style="left:844.900px;top:2.100px" width="82" height="18" viewBox="0 0 82 18" ><path d="M8.50 1.20 L10.97 5.90 L16.20 6.80 L12.49 10.60 L13.26 15.85 L8.50 13.50 L3.74 15.85 L4.51 10.60 L0.80 6.80 L6.03 5.90 Z" fill="url(#gy)" stroke="url(#gy)" stroke-width="0.700" stroke-linejoin="round"/><path d="M24.50 1.20 L26.97 5.90 L32.20 6.80 L28.49 10.60 L29.26 15.85 L24.50 13.50 L19.74 15.85 L20.51 10.60 L16.80 6.80 L22.03 5.90 Z" fill="url(#gs)"/><clipPath id="hc115"><rect x="16.5" y="0" width="8.0" height="18"/></clipPath><path d="M24.50 1.20 L26.97 5.90 L32.20 6.80 L28.49 10.60 L29.26 15.85 L24.50 13.50 L19.74 15.85 L20.51 10.60 L16.80 6.80 L22.03 5.90 Z" fill="url(#gy)" clip-path="url(#hc115)"/><path d="M40.50 1.20 L42.97 5.90 L48.20 6.80 L44.49 10.60 L45.26 15.85 L40.50 13.50 L35.74 15.85 L36.51 10.60 L32.80 6.80 L38.03 5.90 Z" fill="url(#gs)" stroke="url(#gs)" stroke-width="0.700" stroke-linejoin="round"/><path d="M56.50 1.20 L58.97 5.90 L64.20 6.80 L60.49 10.60 L61.26 15.85 L56.50 13.50 L51.74 15.85 L52.51 10.60 L48.80 6.80 L54.03 5.90 Z" fill="url(#gs)" stroke="url(#gs)" stroke-width="0.700" stroke-linejoin="round"/><path d="M72.50 1.20 L74.97 5.90 L80.20 6.80 L76.49 10.60 L77.26 15.85 L72.50 13.50 L67.74 15.85 L68.51 10.60 L64.80 6.80 L70.03 5.90 Z" fill="url(#gs)" stroke="url(#gs)" stroke-width="0.700" stroke-linejoin="round"/></svg>
<div class="s" style="left:936px"><span class="k">Security</span></div>
<div class="s" style="left:1046.500px;width:542px"><span class="k">Ensure Unauthorized Devices are Not Connected</span></div>
</div>
<div class="abs row" style="top:393px;background:#d9412c">
<div class="chk" style="left:6.5px;top:7px"></div>
<svg class="abs" style="left:49.300px;top:2px" width="15" height="18" viewBox="0 0 15 18" ><path d="M4.400 0.800 L1 16.600" stroke="#0b0c0f" stroke-width="1.600"/><path d="M1.500 16.800 H8" stroke="#000" stroke-width="0.800" opacity="0.150"/><path d="M4.800 2.900 Q8 2.900 9.700 4.700 Q11.300 6.200 13.700 6.100 L12.500 13.100 Q10 13.200 8.300 11.700 Q6.500 10.100 3.400 9.900 Z" fill="url(#ff9c21f)"/></svg>
<svg class="abs" style="left:87.800px;top:4px" width="12.2" height="13" viewBox="0 0 12.2 13" ><rect x="0.700" y="0.700" width="10.800" height="8.200" rx="1.600" fill="none" stroke="#2495d6" stroke-width="1.300"/><rect x="4" y="2.900" width="4.800" height="3.200" rx="0.800" fill="none" stroke="#1f9ae0" stroke-width="0.900"/><path d="M3.500 9.500 H8.800 L9.800 11 H2.500 Z" fill="#1c8fd8"/><path d="M1 12.300 H11.500" stroke="#bfe0f5" stroke-width="0.900" opacity="0.750"/></svg>
<div class="e">pinpin</div>
<div class="s" style="left:236.500px;width:222px"><span class="k">VMware Tools Outdated</span></div>
<div class="s" style="left:465.800px"><span class="k">OPENED</span></div>
<div class="s" style="left:545.700px"><span class="k">Error</span></div>
<div class="s" style="left:606px"><span class="k">16.09.2015 23:14:04</span></div>
<div class="s" style="left:726.500px"><span class="k">17.09.2015 07:11:24</span></div>
<svg class="abs" style="left:844.900px;top:2.100px" width="82" height="18" viewBox="0 0 82 18" ><path d="M8.50 1.20 L10.97 5.90 L16.20 6.80 L12.49 10.60 L13.26 15.85 L8.50 13.50 L3.74 15.85 L4.51 10.60 L0.80 6.80 L6.03 5.90 Z" fill="url(#gy)" stroke="url(#gy)" stroke-width="0.700" stroke-linejoin="round"/><path d="M24.50 1.20 L26.97 5.90 L32.20 6.80 L28.49 10.60 L29.26 15.85 L24.50 13.50 L19.74 15.85 L20.51 10.60 L16.80 6.80 L22.03 5.90 Z" fill="url(#gy)" stroke="url(#gy)" stroke-width="0.700" stroke-linejoin="round"/><path d="M40.50 1.20 L42.97 5.90 L48.20 6.80 L44.49 10.60 L45.26 15.85 L40.50 13.50 L35.74 15.85 L36.51 10.60 L32.80 6.80 L38.03 5.90 Z" fill="url(#gy)" stroke="url(#gy)" stroke-width="0.700" stroke-linejoin="round"/><path d="M56.50 1.20 L58.97 5.90 L64.20 6.80 L60.49 10.60 L61.26 15.85 L56.50 13.50 L51.74 15.85 L52.51 10.60 L48.80 6.80 L54.03 5.90 Z" fill="url(#gy)" stroke="url(#gy)" stroke-width="0.700" stroke-linejoin="round"/><path d="M72.50 1.20 L74.97 5.90 L80.20 6.80 L76.49 10.60 L77.26 15.85 L72.50 13.50 L67.74 15.85 L68.51 10.60 L64.80 6.80 L70.03 5.90 Z" fill="url(#gs)" stroke="url(#gs)" stroke-width="0.700" stroke-linejoin="round"/></svg>
<div class="s" style="left:936px"><span class="k">Configuration</span></div>
<div class="s" style="left:1046.500px;width:542px"><span class="k">VM &#x27;pinpin&#x27; has no VMware Tools installed. Install the tools to solve this.</span></div>
</div>
<div class="abs row" style="top:423px;background:#d9412c">
<div class="chk" style="left:6.5px;top:7px"></div>
<svg class="abs" style="left:49.300px;top:2px" width="15" height="18" viewBox="0 0 15 18" ><path d="M4.400 0.800 L1 16.600" stroke="#0b0c0f" stroke-width="1.600"/><path d="M1.500 16.800 H8" stroke="#000" stroke-width="0.800" opacity="0.150"/><path d="M4.800 2.900 Q8 2.900 9.700 4.700 Q11.300 6.200 13.700 6.100 L12.500 13.100 Q10 13.200 8.300 11.700 Q6.500 10.100 3.400 9.900 Z" fill="url(#ff9c21f)"/></svg>
<svg class="abs" style="left:87.800px;top:4px" width="12.2" height="13" viewBox="0 0 12.2 13" ><rect x="0.700" y="0.700" width="10.800" height="8.200" rx="1.600" fill="none" stroke="#2495d6" stroke-width="1.300"/><rect x="4" y="2.900" width="4.800" height="3.200" rx="0.800" fill="none" stroke="#1f9ae0" stroke-width="0.900"/><path d="M3.500 9.500 H8.800 L9.800 11 H2.500 Z" fill="#1c8fd8"/><path d="M1 12.300 H11.500" stroke="#bfe0f5" stroke-width="0.900" opacity="0.750"/></svg>
<div class="e">secdns</div>
<div class="s" style="left:236.500px;width:222px"><span class="k">VM uses local datastore</span></div>
<div class="s" style="left:465.800px"><span class="k">OPENED</span></div>
<div class="s" style="left:545.700px"><span class="k">Error</span></div>
<div class="s" style="left:606px"><span class="k">16.09.2015 23:14:04</span></div>
<div class="s" style="left:726.500px"><span class="k">17.09.2015 07:11:49</span></div>
<svg class="abs" style="left:844.900px;top:2.100px" width="82" height="18" viewBox="0 0 82 18" ><path d="M8.50 1.20 L10.97 5.90 L16.20 6.80 L12.49 10.60 L13.26 15.85 L8.50 13.50 L3.74 15.85 L4.51 10.60 L0.80 6.80 L6.03 5.90 Z" fill="url(#gy)" stroke="url(#gy)" stroke-width="0.700" stroke-linejoin="round"/><path d="M24.50 1.20 L26.97 5.90 L32.20 6.80 L28.49 10.60 L29.26 15.85 L24.50 13.50 L19.74 15.85 L20.51 10.60 L16.80 6.80 L22.03 5.90 Z" fill="url(#gy)" stroke="url(#gy)" stroke-width="0.700" stroke-linejoin="round"/><path d="M40.50 1.20 L42.97 5.90 L48.20 6.80 L44.49 10.60 L45.26 15.85 L40.50 13.50 L35.74 15.85 L36.51 10.60 L32.80 6.80 L38.03 5.90 Z" fill="url(#gs)" stroke="url(#gs)" stroke-width="0.700" stroke-linejoin="round"/><path d="M56.50 1.20 L58.97 5.90 L64.20 6.80 L60.49 10.60 L61.26 15.85 L56.50 13.50 L51.74 15.85 L52.51 10.60 L48.80 6.80 L54.03 5.90 Z" fill="url(#gs)" stroke="url(#gs)" stroke-width="0.700" stroke-linejoin="round"/><path d="M72.50 1.20 L74.97 5.90 L80.20 6.80 L76.49 10.60 L77.26 15.85 L72.50 13.50 L67.74 15.85 L68.51 10.60 L64.80 6.80 L70.03 5.90 Z" fill="url(#gs)" stroke="url(#gs)" stroke-width="0.700" stroke-linejoin="round"/></svg>
<div class="s" style="left:936px"><span class="k">Configuration</span></div>
<div class="s" style="left:1046.500px;width:542px"><span class="k">VM uses local datastore kuiper2_ssd0 for storing files</span></div>
</div>
<div class="abs row" style="top:453px;background:#d9412c">
<div class="chk" style="left:6.5px;top:7px"></div>
<svg class="abs" style="left:49.300px;top:2px" width="15" height="18" viewBox="0 0 15 18" ><path d="M4.400 0.800 L1 16.600" stroke="#0b0c0f" stroke-width="1.600"/><path d="M1.500 16.800 H8" stroke="#000" stroke-width="0.800" opacity="0.150"/><path d="M4.800 2.900 Q8 2.900 9.700 4.700 Q11.300 6.200 13.700 6.100 L12.500 13.100 Q10 13.200 8.300 11.700 Q6.500 10.100 3.400 9.900 Z" fill="url(#ff9c21f)"/></svg>
<svg class="abs" style="left:87.800px;top:4px" width="12.2" height="13" viewBox="0 0 12.2 13" ><rect x="0.700" y="0.700" width="10.800" height="8.200" rx="1.600" fill="none" stroke="#2495d6" stroke-width="1.300"/><rect x="4" y="2.900" width="4.800" height="3.200" rx="0.800" fill="none" stroke="#1f9ae0" stroke-width="0.900"/><path d="M3.500 9.500 H8.800 L9.800 11 H2.500 Z" fill="#1c8fd8"/><path d="M1 12.300 H11.500" stroke="#bfe0f5" stroke-width="0.900" opacity="0.750"/></svg>
<div class="e">saturne</div>
<div class="s" style="left:236.500px;width:222px"><span class="k">VM uses local datastore</span></div>
<div class="s" style="left:465.800px"><span class="k">OPENED</span></div>
<div class="s" style="left:545.700px"><span class="k">Error</span></div>
<div class="s" style="left:606px"><span class="k">16.09.2015 23:14:04</span></div>
<div class="s" style="left:726.500px"><span class="k">17.09.2015 07:11:49</span></div>
<svg class="abs" style="left:844.900px;top:2.100px" width="82" height="18" viewBox="0 0 82 18" ><path d="M8.50 1.20 L10.97 5.90 L16.20 6.80 L12.49 10.60 L13.26 15.85 L8.50 13.50 L3.74 15.85 L4.51 10.60 L0.80 6.80 L6.03 5.90 Z" fill="url(#gy)" stroke="url(#gy)" stroke-width="0.700" stroke-linejoin="round"/><path d="M24.50 1.20 L26.97 5.90 L32.20 6.80 L28.49 10.60 L29.26 15.85 L24.50 13.50 L19.74 15.85 L20.51 10.60 L16.80 6.80 L22.03 5.90 Z" fill="url(#gy)" stroke="url(#gy)" stroke-width="0.700" stroke-linejoin="round"/><path d="M40.50 1.20 L42.97 5.90 L48.20 6.80 L44.49 10.60 L45.26 15.85 L40.50 13.50 L35.74 15.85 L36.51 10.60 L32.80 6.80 L38.03 5.90 Z" fill="url(#gs)" stroke="url(#gs)" stroke-width="0.700" stroke-linejoin="round"/><path d="M56.50 1.20 L58.97 5.90 L64.20 6.80 L60.49 10.60 L61.26 15.85 L56.50 13.50 L51.74 15.85 L52.51 10.60 L48.80 6.80 L54.03 5.90 Z" fill="url(#gs)" stroke="url(#gs)" stroke-width="0.700" stroke-linejoin="round"/><path d="M72.50 1.20 L74.97 5.90 L80.20 6.80 L76.49 10.60 L77.26 15.85 L72.50 13.50 L67.74 15.85 L68.51 10.60 L64.80 6.80 L70.03 5.90 Z" fill="url(#gs)" stroke="url(#gs)" stroke-width="0.700" stroke-linejoin="round"/></svg>
<div class="s" style="left:936px"><span class="k">Configuration</span></div>
<div class="s" style="left:1046.500px;width:542px"><span class="k">VM uses local datastore kuiper1_ssd0 for storing files</span></div>
</div>
<div class="abs row" style="top:483px;background:#d9412c">
<div class="chk" style="left:6.5px;top:7px"></div>
<svg class="abs" style="left:49.300px;top:2px" width="15" height="18" viewBox="0 0 15 18" ><path d="M4.400 0.800 L1 16.600" stroke="#0b0c0f" stroke-width="1.600"/><path d="M1.500 16.800 H8" stroke="#000" stroke-width="0.800" opacity="0.150"/><path d="M4.800 2.900 Q8 2.900 9.700 4.700 Q11.300 6.200 13.700 6.100 L12.500 13.100 Q10 13.200 8.300 11.700 Q6.500 10.100 3.400 9.900 Z" fill="url(#ff9c21f)"/></svg>
<svg class="abs" style="left:87.800px;top:4px" width="12.2" height="13" viewBox="0 0 12.2 13" ><rect x="0.700" y="0.700" width="10.800" height="8.200" rx="1.600" fill="none" stroke="#2495d6" stroke-width="1.300"/><rect x="4" y="2.900" width="4.800" height="3.200" rx="0.800" fill="none" stroke="#1f9ae0" stroke-width="0.900"/><path d="M3.500 9.500 H8.800 L9.800 11 H2.500 Z" fill="#1c8fd8"/><path d="M1 12.300 H11.500" stroke="#bfe0f5" stroke-width="0.900" opacity="0.750"/></svg>
<div class="e">mercure</div>
<div class="s" style="left:236.500px;width:222px"><span class="k">VM uses local datastore</span></div>
<div class="s" style="left:465.800px"><span class="k">OPENED</span></div>
<div class="s" style="left:545.700px"><span class="k">Error</span></div>
<div class="s" style="left:606px"><span class="k">16.09.2015 23:14:04</span></div>
<div class="s" style="left:726.500px"><span class="k">17.09.2015 07:11:49</span></div>
<svg class="abs" style="left:844.900px;top:2.100px" width="82" height="18" viewBox="0 0 82 18" ><path d="M8.50 1.20 L10.97 5.90 L16.20 6.80 L12.49 10.60 L13.26 15.85 L8.50 13.50 L3.74 15.85 L4.51 10.60 L0.80 6.80 L6.03 5.90 Z" fill="url(#gy)" stroke="url(#gy)" stroke-width="0.700" stroke-linejoin="round"/><path d="M24.50 1.20 L26.97 5.90 L32.20 6.80 L28.49 10.60 L29.26 15.85 L24.50 13.50 L19.74 15.85 L20.51 10.60 L16.80 6.80 L22.03 5.90 Z" fill="url(#gy)" stroke="url(#gy)" stroke-width="0.700" stroke-linejoin="round"/><path d="M40.50 1.20 L42.97 5.90 L48.20 6.80 L44.49 10.60 L45.26 15.85 L40.50 13.50 L35.74 15.85 L36.51 10.60 L32.80 6.80 L38.03 5.90 Z" fill="url(#gs)" stroke="url(#gs)" stroke-width="0.700" stroke-linejoin="round"/><path d="M56.50 1.20 L58.97 5.90 L64.20 6.80 L60.49 10.60 L61.26 15.85 L56.50 13.50 L51.74 15.85 L52.51 10.60 L48.80 6.80 L54.03 5.90 Z" fill="url(#gs)" stroke="url(#gs)" stroke-width="0.700" stroke-linejoin="round"/><path d="M72.50 1.20 L74.97 5.90 L80.20 6.80 L76.49 10.60 L77.26 15.85 L72.50 13.50 L67.74 15.85 L68.51 10.60 L64.80 6.80 L70.03 5.90 Z" fill="url(#gs)" stroke="url(#gs)" stroke-width="0.700" stroke-linejoin="round"/></svg>
<div class="s" style="left:936px"><span class="k">Configuration</span></div>
<div class="s" style="left:1046.500px;width:542px"><span class="k">VM uses local datastore kuiper1_ssd0 for storing files</span></div>
</div>
<div class="abs row" style="top:513px;background:#c17207">
<div class="chk" style="left:6.5px;top:7px"></div>
<svg class="abs" style="left:49.300px;top:2px" width="15" height="18" viewBox="0 0 15 18" ><path d="M4.400 0.800 L1 16.600" stroke="#0b0c0f" stroke-width="1.600"/><path d="M1.500 16.800 H8" stroke="#000" stroke-width="0.800" opacity="0.150"/><path d="M4.800 2.900 Q8 2.900 9.700 4.700 Q11.300 6.200 13.700 6.100 L12.500 13.100 Q10 13.200 8.300 11.700 Q6.500 10.100 3.400 9.900 Z" fill="url(#f74c52c)"/></svg>
<svg class="abs" style="left:87.800px;top:4px" width="12.2" height="13" viewBox="0 0 12.2 13" ><rect x="0.700" y="0.700" width="10.800" height="8.200" rx="1.600" fill="none" stroke="#2495d6" stroke-width="1.300"/><rect x="4" y="2.900" width="4.800" height="3.200" rx="0.800" fill="none" stroke="#1f9ae0" stroke-width="0.900"/><path d="M3.500 9.500 H8.800 L9.800 11 H2.500 Z" fill="#1c8fd8"/><path d="M1 12.300 H11.500" stroke="#bfe0f5" stroke-width="0.900" opacity="0.750"/></svg>
<div class="e">manageiq</div>
<div class="s" style="left:236.500px;width:222px"><span class="k">Monster VM: too many vCPU cores f…</span></div>
<div class="s" style="left:465.800px"><span class="k">OPENED</span></div>
<div class="s" style="left:545.700px"><span class="k">Warning</span></div>
<div class="s" style="left:606px"><span class="k">16.09.2015 23:14:04</span></div>
<div class="s" style="left:726.500px"><span class="k">17.09.2015 07:11:12</span></div>
<svg class="abs" style="left:844.900px;top:2.100px" width="82" height="18" viewBox="0 0 82 18" ><path d="M8.50 1.20 L10.97 5.90 L16.20 6.80 L12.49 10.60 L13.26 15.85 L8.50 13.50 L3.74 15.85 L4.51 10.60 L0.80 6.80 L6.03 5.90 Z" fill="url(#gs)" stroke="url(#gs)" stroke-width="0.700" stroke-linejoin="round"/><path d="M24.50 1.20 L26.97 5.90 L32.20 6.80 L28.49 10.60 L29.26 15.85 L24.50 13.50 L19.74 15.85 L20.51 10.60 L16.80 6.80 L22.03 5.90 Z" fill="url(#gs)" stroke="url(#gs)" stroke-width="0.700" stroke-linejoin="round"/><path d="M40.50 1.20 L42.97 5.90 L48.20 6.80 L44.49 10.60 L45.26 15.85 L40.50 13.50 L35.74 15.85 L36.51 10.60 L32.80 6.80 L38.03 5.90 Z" fill="url(#gs)" stroke="url(#gs)" stroke-width="0.700" stroke-linejoin="round"/><path d="M56.50 1.20 L58.97 5.90 L64.20 6.80 L60.49 10.60 L61.26 15.85 L56.50 13.50 L51.74 15.85 L52.51 10.60 L48.80 6.80 L54.03 5.90 Z" fill="url(#gs)" stroke="url(#gs)" stroke-width="0.700" stroke-linejoin="round"/><path d="M72.50 1.20 L74.97 5.90 L80.20 6.80 L76.49 10.60 L77.26 15.85 L72.50 13.50 L67.74 15.85 L68.51 10.60 L64.80 6.80 L70.03 5.90 Z" fill="url(#gs)" stroke="url(#gs)" stroke-width="0.700" stroke-linejoin="round"/></svg>
<div class="s" style="left:936px"><span class="k">Configuration</span></div>
<div class="s" style="left:1046.500px;width:542px"><span class="k">Virtual Machine accesses more vCPU than physical NUMA node cores exist. Recommended …</span></div>
</div>
<div class="abs row" style="top:543px;background:#c17207">
<div class="chk" style="left:6.5px;top:7px"></div>
<svg class="abs" style="left:49.300px;top:2px" width="15" height="18" viewBox="0 0 15 18" ><path d="M4.400 0.800 L1 16.600" stroke="#0b0c0f" stroke-width="1.600"/><path d="M1.500 16.800 H8" stroke="#000" stroke-width="0.800" opacity="0.150"/><path d="M4.800 2.900 Q8 2.900 9.700 4.700 Q11.300 6.200 13.700 6.100 L12.500 13.100 Q10 13.200 8.300 11.700 Q6.500 10.100 3.400 9.900 Z" fill="url(#f74c52c)"/></svg>
<svg class="abs" style="left:87.800px;top:4px" width="12.2" height="13" viewBox="0 0 12.2 13" ><rect x="0.700" y="0.700" width="10.800" height="8.200" rx="1.600" fill="none" stroke="#2495d6" stroke-width="1.300"/><rect x="4" y="2.900" width="4.800" height="3.200" rx="0.800" fill="none" stroke="#1f9ae0" stroke-width="0.900"/><path d="M3.500 9.500 H8.800 L9.800 11 H2.500 Z" fill="#1c8fd8"/><path d="M1 12.300 H11.500" stroke="#bfe0f5" stroke-width="0.900" opacity="0.750"/></svg>
<div class="e">europe</div>
<div class="s" style="left:236.500px;width:222px"><span class="k">Monster VM: too many vCPU cores f…</span></div>
<div class="s" style="left:465.800px"><span class="k">OPENED</span></div>
<div class="s" style="left:545.700px"><span class="k">Warning</span></div>
<div class="s" style="left:606px"><span class="k">16.09.2015 23:14:04</span></div>
<div class="s" style="left:726.500px"><span class="k">17.09.2015 07:11:12</span></div>
<svg class="abs" style="left:844.900px;top:2.100px" width="82" height="18" viewBox="0 0 82 18" ><path d="M8.50 1.20 L10.97 5.90 L16.20 6.80 L12.49 10.60 L13.26 15.85 L8.50 13.50 L3.74 15.85 L4.51 10.60 L0.80 6.80 L6.03 5.90 Z" fill="url(#gs)" stroke="url(#gs)" stroke-width="0.700" stroke-linejoin="round"/><path d="M24.50 1.20 L26.97 5.90 L32.20 6.80 L28.49 10.60 L29.26 15.85 L24.50 13.50 L19.74 15.85 L20.51 10.60 L16.80 6.80 L22.03 5.90 Z" fill="url(#gs)" stroke="url(#gs)" stroke-width="0.700" stroke-linejoin="round"/><path d="M40.50 1.20 L42.97 5.90 L48.20 6.80 L44.49 10.60 L45.26 15.85 L40.50 13.50 L35.74 15.85 L36.51 10.60 L32.80 6.80 L38.03 5.90 Z" fill="url(#gs)" stroke="url(#gs)" stroke-width="0.700" stroke-linejoin="round"/><path d="M56.50 1.20 L58.97 5.90 L64.20 6.80 L60.49 10.60 L61.26 15.85 L56.50 13.50 L51.74 15.85 L52.51 10.60 L48.80 6.80 L54.03 5.90 Z" fill="url(#gs)" stroke="url(#gs)" stroke-width="0.700" stroke-linejoin="round"/><path d="M72.50 1.20 L74.97 5.90 L80.20 6.80 L76.49 10.60 L77.26 15.85 L72.50 13.50 L67.74 15.85 L68.51 10.60 L64.80 6.80 L70.03 5.90 Z" fill="url(#gs)" stroke="url(#gs)" stroke-width="0.700" stroke-linejoin="round"/></svg>
<div class="s" style="left:936px"><span class="k">Configuration</span></div>
<div class="s" style="left:1046.500px;width:542px"><span class="k">Virtual Machine accesses more vCPU than physical NUMA node cores exist. Recommended …</span></div>
</div>
</div>
<div id="pg" class="abs">
<svg class="abs" style="left:11.300px;top:8.200px" width="12" height="13" viewBox="0 0 12 13" ><rect x="0.500" y="0.500" width="2" height="12" fill="#7d8292"/><path d="M11 0.500 L4 6.500 L11 12.500 Z" fill="#7d8292"/></svg><svg class="abs" style="left:42px;top:8.800px" width="7" height="12" viewBox="0 0 8 13" ><path d="M7.500 0.500 L0.500 6.500 L7.500 12.500 Z" fill="#7d8292"/></svg><svg class="abs" style="left:176.600px;top:8.800px" width="7" height="12" viewBox="0 0 8 13" ><path d="M0.500 0.500 L7.500 6.500 L0.500 12.500 Z" fill="#7d8292"/></svg><svg class="abs" style="left:204.300px;top:8.200px" width="12" height="13" viewBox="0 0 12 13" ><path d="M1 0.500 L8 6.500 L1 12.500 Z" fill="#7d8292"/><rect x="9.500" y="0.500" width="2" height="12" fill="#7d8292"/></svg><div class="abs" style="left:66.5px;top:8px;width:2px;height:15px;background:linear-gradient(90deg,#151821 50%,#3d4358 50%)"></div><div class="abs" style="left:164px;top:8px;width:2px;height:15px;background:linear-gradient(90deg,#151821 50%,#3d4358 50%)"></div><div class="abs" style="left:230px;top:8px;width:2px;height:15px;background:linear-gradient(90deg,#151821 50%,#3d4358 50%)"></div><div class="abs" style="left:265.8px;top:8px;width:2px;height:15px;background:linear-gradient(90deg,#151821 50%,#3d4358 50%)"></div><div class="abs" style="left:451.2px;top:8px;width:2px;height:15px;background:linear-gradient(90deg,#151821 50%,#3d4358 50%)"></div><svg class="abs" style="left:238.500px;top:8px" width="15" height="14" viewBox="0 0 15 14" ><path d="M2.200 6.500 A5.200 5.200 0 0 1 11 3.300" stroke="#2f8fe8" stroke-width="2.300" fill="none"/><path d="M8.300 5.600 L14.300 0.300 L14.300 6.600 Z" fill="#2f8fe8"/><path d="M12.800 7.500 A5.200 5.200 0 0 1 4 10.700" stroke="#2f8fe8" stroke-width="2.300" fill="none"/><path d="M6.700 8.400 L0.700 13.700 L0.700 7.400 Z" fill="#2f8fe8"/></svg><svg class="abs" style="left:459.800px;top:7.200px" width="15" height="15" viewBox="0 0 15 15" ><rect x="0.500" y="0.500" width="14" height="14" rx="1" fill="#e4eaee" stroke="#9aa8c4"/><path d="M1.500 1.500 H6 L4.500 3 L6 4.500 L4.500 6 L3 4.500 L1.500 6 Z M13.500 1.500 V6 L12 4.500 L10.500 6 L9 4.500 L10.500 3 L9 1.500 Z M1.500 13.500 V9 L3 10.500 L4.500 9 L6 10.500 L4.500 12 L6 13.500 Z M13.500 13.500 H9 L10.500 12 L9 10.500 L10.500 9 L12 10.500 L13.500 9 Z" fill="#1c3a94"/></svg>
<div class="t" style="left:68.800px">Page</div>
<div class="abs" style="left:102.400px;top:5px;width:33.400px;height:20px;background:#fff;color:#111;font-size:13.5px;line-height:21px;padding-left:2px">1</div>
<div class="t" style="left:135.800px">of 1</div>
<div class="t" style="left:268.500px">Lines per Page:</div>
<div class="abs inp" style="left:367px;top:4px;width:80px;height:22px"><span class="abs" style="left:3px;top:0.500px;font-size:13.7px;line-height:18px">50</span><div class="abs" style="left:57px;top:0;width:19px;height:18px;background:#1e2230;border-left:2px solid #585e74"><svg class="abs" style="left:2px;top:5.500px" width="13" height="9" viewBox="0 0 13 9"><path d="M0.300 2.200 Q0.300 0 2.400 0.300 L6.400 3 L10.400 0.300 Q12.500 0 12.500 2.200 L6.400 8.700 Z" fill="#fff"/></svg></div></div>
<div class="t" style="right:5px">Displaying 1 - 48 of 48</div>
</div>
<div id="contact" class="abs"><span class="abs" style="left:10px;top:0">Contact us!</span><svg class="abs" style="left:185px;top:10px" width="56" height="14" viewBox="0 0 56 14" fill="none" stroke="#fff" stroke-width="2"><path d="M2 10 L7 5 L12 10"/><path d="M23 3 L31 11 M31 3 L23 11"/><path d="M42 12 L51 3 M44.5 2.5 L51.5 2.5 L51.5 9.5"/></svg></div>
</body></html>
